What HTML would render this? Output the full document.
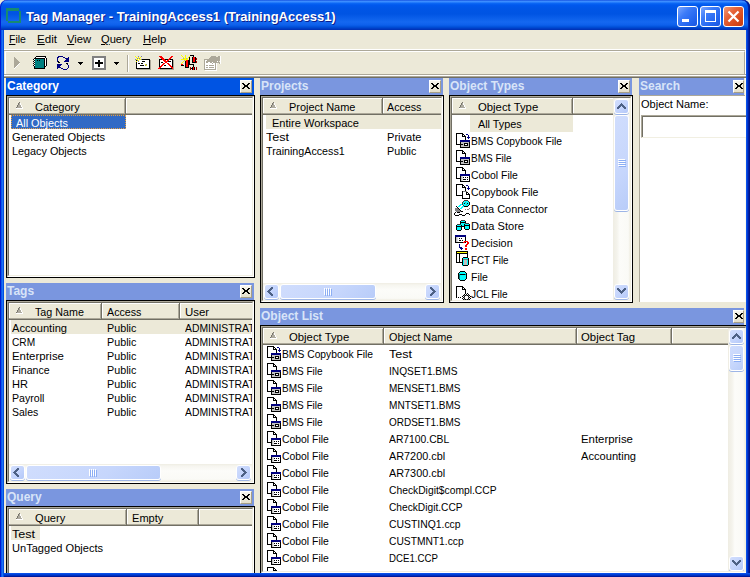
<!DOCTYPE html>
<html><head><meta charset="utf-8"><style>
html,body{margin:0;padding:0;width:750px;height:577px;overflow:hidden;background:#ECE9D8}
body>div,body>svg{position:absolute}
#root{position:absolute;left:0;top:0;width:750px;height:577px;overflow:hidden}
#root div,#root svg{position:absolute}
.t{font-family:'Liberation Sans', sans-serif;font-size:11px;line-height:14px;white-space:nowrap;color:#000}
u{text-decoration:underline}
</style></head><body><svg width="0" height="0" style="position:absolute"><defs><symbol id="i0" viewBox="0 0 18 17"><rect x="3" y="1" width="7" height="1" fill="#000"/><rect x="3" y="2" width="1" height="1" fill="#000"/><rect x="4" y="2" width="5" height="1" fill="#fff"/><rect x="9" y="2" width="2" height="1" fill="#000"/><rect x="13" y="2" width="2" height="1" fill="#000080"/><rect x="3" y="3" width="1" height="1" fill="#000"/><rect x="4" y="3" width="5" height="1" fill="#fff"/><rect x="9" y="3" width="1" height="1" fill="#000"/><rect x="10" y="3" width="1" height="1" fill="#fff"/><rect x="11" y="3" width="1" height="1" fill="#000"/><rect x="15" y="3" width="1" height="1" fill="#000080"/><rect x="3" y="4" width="1" height="1" fill="#000"/><rect x="4" y="4" width="5" height="1" fill="#fff"/><rect x="9" y="4" width="4" height="1" fill="#000"/><rect x="15" y="4" width="1" height="1" fill="#000080"/><rect x="3" y="5" width="1" height="1" fill="#000"/><rect x="4" y="5" width="8" height="1" fill="#fff"/><rect x="12" y="5" width="1" height="1" fill="#000"/><rect x="14" y="5" width="3" height="1" fill="#000080"/><rect x="3" y="6" width="1" height="1" fill="#000"/><rect x="4" y="6" width="8" height="1" fill="#fff"/><rect x="12" y="6" width="1" height="1" fill="#000"/><rect x="15" y="6" width="1" height="1" fill="#000080"/><rect x="3" y="7" width="1" height="1" fill="#000"/><rect x="4" y="7" width="8" height="1" fill="#fff"/><rect x="12" y="7" width="1" height="1" fill="#000"/><rect x="3" y="8" width="1" height="1" fill="#000"/><rect x="4" y="8" width="3" height="1" fill="#fff"/><rect x="7" y="8" width="10" height="1" fill="#000080"/><rect x="3" y="9" width="1" height="1" fill="#000"/><rect x="4" y="9" width="3" height="1" fill="#fff"/><rect x="7" y="9" width="10" height="1" fill="#000080"/><rect x="3" y="10" width="1" height="1" fill="#000"/><rect x="4" y="10" width="3" height="1" fill="#fff"/><rect x="7" y="10" width="1" height="1" fill="#000"/><rect x="8" y="10" width="8" height="1" fill="#C0C0C0"/><rect x="16" y="10" width="1" height="1" fill="#000"/><rect x="3" y="11" width="1" height="1" fill="#000"/><rect x="4" y="11" width="3" height="1" fill="#fff"/><rect x="7" y="11" width="1" height="1" fill="#000"/><rect x="8" y="11" width="3" height="1" fill="#C0C0C0"/><rect x="11" y="11" width="4" height="1" fill="#000"/><rect x="15" y="11" width="1" height="1" fill="#C0C0C0"/><rect x="16" y="11" width="1" height="1" fill="#000"/><rect x="3" y="12" width="7" height="1" fill="#000"/><rect x="10" y="12" width="1" height="1" fill="#C0C0C0"/><rect x="11" y="12" width="1" height="1" fill="#000"/><rect x="12" y="12" width="2" height="1" fill="#fff"/><rect x="14" y="12" width="1" height="1" fill="#000"/><rect x="15" y="12" width="1" height="1" fill="#C0C0C0"/><rect x="16" y="12" width="1" height="1" fill="#000"/><rect x="7" y="13" width="1" height="1" fill="#000"/><rect x="8" y="13" width="3" height="1" fill="#C0C0C0"/><rect x="11" y="13" width="4" height="1" fill="#000"/><rect x="15" y="13" width="1" height="1" fill="#C0C0C0"/><rect x="16" y="13" width="1" height="1" fill="#000"/><rect x="7" y="14" width="1" height="1" fill="#000"/><rect x="8" y="14" width="8" height="1" fill="#C0C0C0"/><rect x="16" y="14" width="1" height="1" fill="#000"/><rect x="7" y="15" width="10" height="1" fill="#000"/></symbol><symbol id="i1" viewBox="0 0 18 17"><rect x="3" y="1" width="7" height="1" fill="#000"/><rect x="3" y="2" width="1" height="1" fill="#000"/><rect x="4" y="2" width="5" height="1" fill="#fff"/><rect x="9" y="2" width="2" height="1" fill="#000"/><rect x="3" y="3" width="1" height="1" fill="#000"/><rect x="4" y="3" width="5" height="1" fill="#fff"/><rect x="9" y="3" width="1" height="1" fill="#000"/><rect x="10" y="3" width="1" height="1" fill="#fff"/><rect x="11" y="3" width="1" height="1" fill="#000"/><rect x="3" y="4" width="1" height="1" fill="#000"/><rect x="4" y="4" width="5" height="1" fill="#fff"/><rect x="9" y="4" width="4" height="1" fill="#000"/><rect x="3" y="5" width="1" height="1" fill="#000"/><rect x="4" y="5" width="8" height="1" fill="#fff"/><rect x="12" y="5" width="1" height="1" fill="#000"/><rect x="3" y="6" width="1" height="1" fill="#000"/><rect x="4" y="6" width="8" height="1" fill="#fff"/><rect x="12" y="6" width="1" height="1" fill="#000"/><rect x="3" y="7" width="1" height="1" fill="#000"/><rect x="4" y="7" width="8" height="1" fill="#fff"/><rect x="12" y="7" width="1" height="1" fill="#000"/><rect x="3" y="8" width="1" height="1" fill="#000"/><rect x="4" y="8" width="3" height="1" fill="#fff"/><rect x="7" y="8" width="10" height="1" fill="#000080"/><rect x="3" y="9" width="1" height="1" fill="#000"/><rect x="4" y="9" width="3" height="1" fill="#fff"/><rect x="7" y="9" width="10" height="1" fill="#000080"/><rect x="3" y="10" width="1" height="1" fill="#000"/><rect x="4" y="10" width="3" height="1" fill="#fff"/><rect x="7" y="10" width="1" height="1" fill="#000"/><rect x="8" y="10" width="8" height="1" fill="#C0C0C0"/><rect x="16" y="10" width="1" height="1" fill="#000"/><rect x="3" y="11" width="1" height="1" fill="#000"/><rect x="4" y="11" width="3" height="1" fill="#fff"/><rect x="7" y="11" width="1" height="1" fill="#000"/><rect x="8" y="11" width="3" height="1" fill="#C0C0C0"/><rect x="11" y="11" width="4" height="1" fill="#000"/><rect x="15" y="11" width="1" height="1" fill="#C0C0C0"/><rect x="16" y="11" width="1" height="1" fill="#000"/><rect x="3" y="12" width="7" height="1" fill="#000"/><rect x="10" y="12" width="1" height="1" fill="#C0C0C0"/><rect x="11" y="12" width="1" height="1" fill="#000"/><rect x="12" y="12" width="2" height="1" fill="#fff"/><rect x="14" y="12" width="1" height="1" fill="#000"/><rect x="15" y="12" width="1" height="1" fill="#C0C0C0"/><rect x="16" y="12" width="1" height="1" fill="#000"/><rect x="7" y="13" width="1" height="1" fill="#000"/><rect x="8" y="13" width="3" height="1" fill="#C0C0C0"/><rect x="11" y="13" width="4" height="1" fill="#000"/><rect x="15" y="13" width="1" height="1" fill="#C0C0C0"/><rect x="16" y="13" width="1" height="1" fill="#000"/><rect x="7" y="14" width="1" height="1" fill="#000"/><rect x="8" y="14" width="8" height="1" fill="#C0C0C0"/><rect x="16" y="14" width="1" height="1" fill="#000"/><rect x="7" y="15" width="10" height="1" fill="#000"/></symbol><symbol id="i2" viewBox="0 0 18 17"><rect x="3" y="1" width="7" height="1" fill="#000"/><rect x="3" y="2" width="1" height="1" fill="#000"/><rect x="4" y="2" width="5" height="1" fill="#fff"/><rect x="9" y="2" width="2" height="1" fill="#000"/><rect x="3" y="3" width="1" height="1" fill="#000"/><rect x="4" y="3" width="5" height="1" fill="#fff"/><rect x="9" y="3" width="1" height="1" fill="#000"/><rect x="10" y="3" width="1" height="1" fill="#fff"/><rect x="11" y="3" width="1" height="1" fill="#000"/><rect x="3" y="4" width="1" height="1" fill="#000"/><rect x="4" y="4" width="5" height="1" fill="#fff"/><rect x="9" y="4" width="4" height="1" fill="#000"/><rect x="3" y="5" width="1" height="1" fill="#000"/><rect x="4" y="5" width="8" height="1" fill="#fff"/><rect x="12" y="5" width="1" height="1" fill="#000"/><rect x="3" y="6" width="1" height="1" fill="#000"/><rect x="4" y="6" width="8" height="1" fill="#fff"/><rect x="12" y="6" width="1" height="1" fill="#000"/><rect x="3" y="7" width="1" height="1" fill="#000"/><rect x="4" y="7" width="8" height="1" fill="#fff"/><rect x="12" y="7" width="1" height="1" fill="#000"/><rect x="3" y="8" width="1" height="1" fill="#000"/><rect x="4" y="8" width="3" height="1" fill="#fff"/><rect x="7" y="8" width="10" height="1" fill="#000080"/><rect x="3" y="9" width="1" height="1" fill="#000"/><rect x="4" y="9" width="3" height="1" fill="#fff"/><rect x="7" y="9" width="10" height="1" fill="#000080"/><rect x="3" y="10" width="1" height="1" fill="#000"/><rect x="4" y="10" width="3" height="1" fill="#fff"/><rect x="7" y="10" width="1" height="1" fill="#000"/><rect x="8" y="10" width="1" height="1" fill="#C0C0C0"/><rect x="9" y="10" width="1" height="1" fill="#E0E0E0"/><rect x="10" y="10" width="6" height="1" fill="#fff"/><rect x="16" y="10" width="1" height="1" fill="#000"/><rect x="3" y="11" width="1" height="1" fill="#000"/><rect x="4" y="11" width="3" height="1" fill="#fff"/><rect x="7" y="11" width="1" height="1" fill="#000"/><rect x="8" y="11" width="1" height="1" fill="#C0C0C0"/><rect x="9" y="11" width="1" height="1" fill="#E0E0E0"/><rect x="10" y="11" width="1" height="1" fill="#000"/><rect x="11" y="11" width="1" height="1" fill="#fff"/><rect x="12" y="11" width="1" height="1" fill="#000"/><rect x="13" y="11" width="1" height="1" fill="#fff"/><rect x="14" y="11" width="1" height="1" fill="#000"/><rect x="15" y="11" width="1" height="1" fill="#fff"/><rect x="16" y="11" width="1" height="1" fill="#000"/><rect x="3" y="12" width="5" height="1" fill="#000"/><rect x="8" y="12" width="1" height="1" fill="#C0C0C0"/><rect x="9" y="12" width="1" height="1" fill="#E0E0E0"/><rect x="10" y="12" width="6" height="1" fill="#fff"/><rect x="16" y="12" width="1" height="1" fill="#000"/><rect x="7" y="13" width="1" height="1" fill="#000"/><rect x="8" y="13" width="1" height="1" fill="#C0C0C0"/><rect x="9" y="13" width="1" height="1" fill="#E0E0E0"/><rect x="10" y="13" width="3" height="1" fill="#000"/><rect x="13" y="13" width="1" height="1" fill="#fff"/><rect x="14" y="13" width="1" height="1" fill="#000"/><rect x="15" y="13" width="1" height="1" fill="#fff"/><rect x="16" y="13" width="1" height="1" fill="#000"/><rect x="7" y="14" width="1" height="1" fill="#000"/><rect x="8" y="14" width="1" height="1" fill="#C0C0C0"/><rect x="9" y="14" width="1" height="1" fill="#E0E0E0"/><rect x="10" y="14" width="6" height="1" fill="#fff"/><rect x="16" y="14" width="1" height="1" fill="#000"/><rect x="7" y="15" width="10" height="1" fill="#000"/></symbol><symbol id="i3" viewBox="0 0 18 17"><rect x="3" y="1" width="7" height="1" fill="#000"/><rect x="3" y="2" width="1" height="1" fill="#000"/><rect x="4" y="2" width="5" height="1" fill="#fff"/><rect x="9" y="2" width="2" height="1" fill="#000"/><rect x="13" y="2" width="2" height="1" fill="#000080"/><rect x="3" y="3" width="1" height="1" fill="#000"/><rect x="4" y="3" width="5" height="1" fill="#fff"/><rect x="9" y="3" width="1" height="1" fill="#000"/><rect x="10" y="3" width="1" height="1" fill="#fff"/><rect x="11" y="3" width="1" height="1" fill="#000"/><rect x="15" y="3" width="1" height="1" fill="#000080"/><rect x="3" y="4" width="1" height="1" fill="#000"/><rect x="4" y="4" width="5" height="1" fill="#fff"/><rect x="9" y="4" width="4" height="1" fill="#000"/><rect x="15" y="4" width="1" height="1" fill="#000080"/><rect x="3" y="5" width="1" height="1" fill="#000"/><rect x="4" y="5" width="8" height="1" fill="#fff"/><rect x="12" y="5" width="1" height="1" fill="#000"/><rect x="14" y="5" width="3" height="1" fill="#000080"/><rect x="3" y="6" width="1" height="1" fill="#000"/><rect x="4" y="6" width="8" height="1" fill="#fff"/><rect x="12" y="6" width="1" height="1" fill="#000"/><rect x="15" y="6" width="1" height="1" fill="#000080"/><rect x="3" y="7" width="1" height="1" fill="#000"/><rect x="4" y="7" width="8" height="1" fill="#fff"/><rect x="12" y="7" width="1" height="1" fill="#000"/><rect x="3" y="8" width="1" height="1" fill="#000"/><rect x="4" y="8" width="5" height="1" fill="#fff"/><rect x="9" y="8" width="1" height="1" fill="#000"/><rect x="10" y="8" width="4" height="1" fill="#808080"/><rect x="14" y="8" width="3" height="1" fill="#fff"/><rect x="3" y="9" width="1" height="1" fill="#000"/><rect x="4" y="9" width="5" height="1" fill="#fff"/><rect x="9" y="9" width="1" height="1" fill="#000"/><rect x="10" y="9" width="3" height="1" fill="#fff"/><rect x="13" y="9" width="2" height="1" fill="#000"/><rect x="3" y="10" width="1" height="1" fill="#000"/><rect x="4" y="10" width="5" height="1" fill="#fff"/><rect x="9" y="10" width="1" height="1" fill="#000"/><rect x="10" y="10" width="3" height="1" fill="#fff"/><rect x="13" y="10" width="1" height="1" fill="#000"/><rect x="14" y="10" width="1" height="1" fill="#fff"/><rect x="15" y="10" width="1" height="1" fill="#000"/><rect x="3" y="11" width="1" height="1" fill="#000"/><rect x="4" y="11" width="5" height="1" fill="#fff"/><rect x="9" y="11" width="1" height="1" fill="#000"/><rect x="10" y="11" width="3" height="1" fill="#fff"/><rect x="13" y="11" width="4" height="1" fill="#000"/><rect x="3" y="12" width="7" height="1" fill="#000"/><rect x="10" y="12" width="6" height="1" fill="#fff"/><rect x="16" y="12" width="1" height="1" fill="#000"/><rect x="9" y="13" width="1" height="1" fill="#000"/><rect x="10" y="13" width="6" height="1" fill="#fff"/><rect x="16" y="13" width="1" height="1" fill="#000"/><rect x="9" y="14" width="1" height="1" fill="#000"/><rect x="10" y="14" width="6" height="1" fill="#fff"/><rect x="16" y="14" width="1" height="1" fill="#000"/><rect x="9" y="15" width="8" height="1" fill="#000"/></symbol><symbol id="i4" viewBox="0 0 18 17"><rect x="11" y="0" width="4" height="1" fill="#404040"/><rect x="10" y="1" width="1" height="1" fill="#404040"/><rect x="11" y="1" width="4" height="1" fill="#00FFFF"/><rect x="15" y="1" width="1" height="1" fill="#404040"/><rect x="9" y="2" width="1" height="1" fill="#404040"/><rect x="10" y="2" width="2" height="1" fill="#00FFFF"/><rect x="12" y="2" width="1" height="1" fill="#808080"/><rect x="13" y="2" width="3" height="1" fill="#00FFFF"/><rect x="16" y="2" width="1" height="1" fill="#000"/><rect x="9" y="3" width="1" height="1" fill="#404040"/><rect x="10" y="3" width="1" height="1" fill="#00FFFF"/><rect x="11" y="3" width="1" height="1" fill="#000"/><rect x="12" y="3" width="2" height="1" fill="#00FFFF"/><rect x="14" y="3" width="1" height="1" fill="#000"/><rect x="15" y="3" width="1" height="1" fill="#00FFFF"/><rect x="16" y="3" width="1" height="1" fill="#000"/><rect x="7" y="4" width="2" height="1" fill="#00FFFF"/><rect x="9" y="4" width="1" height="1" fill="#404040"/><rect x="10" y="4" width="3" height="1" fill="#00FFFF"/><rect x="13" y="4" width="1" height="1" fill="#808080"/><rect x="14" y="4" width="2" height="1" fill="#00FFFF"/><rect x="16" y="4" width="1" height="1" fill="#000"/><rect x="6" y="5" width="2" height="1" fill="#00FFFF"/><rect x="10" y="5" width="1" height="1" fill="#404040"/><rect x="11" y="5" width="4" height="1" fill="#00FFFF"/><rect x="15" y="5" width="1" height="1" fill="#000"/><rect x="3" y="6" width="1" height="1" fill="#000"/><rect x="5" y="6" width="2" height="1" fill="#00FFFF"/><rect x="9" y="6" width="2" height="1" fill="#00FFFF"/><rect x="11" y="6" width="4" height="1" fill="#000"/><rect x="4" y="7" width="1" height="1" fill="#000"/><rect x="8" y="7" width="2" height="1" fill="#00FFFF"/><rect x="2" y="8" width="3" height="1" fill="#808080"/><rect x="5" y="8" width="1" height="1" fill="#000"/><rect x="7" y="8" width="2" height="1" fill="#00FFFF"/><rect x="16" y="8" width="1" height="1" fill="#808080"/><rect x="2" y="9" width="4" height="1" fill="#808080"/><rect x="6" y="9" width="1" height="1" fill="#000"/><rect x="12" y="9" width="1" height="1" fill="#808080"/><rect x="14" y="9" width="2" height="1" fill="#808080"/><rect x="2" y="10" width="5" height="1" fill="#808080"/><rect x="7" y="10" width="1" height="1" fill="#000"/><rect x="3" y="11" width="5" height="1" fill="#808080"/><rect x="8" y="11" width="2" height="1" fill="#000"/><rect x="2" y="12" width="1" height="1" fill="#000"/><rect x="4" y="12" width="3" height="1" fill="#000"/><rect x="1" y="13" width="1" height="1" fill="#000"/><rect x="13" y="13" width="3" height="1" fill="#000"/><rect x="1" y="14" width="1" height="1" fill="#000"/><rect x="6" y="14" width="3" height="1" fill="#000"/><rect x="12" y="14" width="1" height="1" fill="#000"/><rect x="16" y="14" width="1" height="1" fill="#000"/><rect x="2" y="15" width="4" height="1" fill="#000"/><rect x="9" y="15" width="3" height="1" fill="#000"/></symbol><symbol id="i5" viewBox="0 0 18 17"><rect x="8" y="3" width="4" height="1" fill="#404040"/><rect x="7" y="4" width="1" height="1" fill="#000"/><rect x="8" y="4" width="4" height="1" fill="#00FFFF"/><rect x="12" y="4" width="1" height="1" fill="#000"/><rect x="7" y="5" width="6" height="1" fill="#000"/><rect x="7" y="6" width="1" height="1" fill="#000"/><rect x="8" y="6" width="4" height="1" fill="#00FFFF"/><rect x="12" y="6" width="4" height="1" fill="#404040"/><rect x="4" y="7" width="4" height="1" fill="#404040"/><rect x="8" y="7" width="3" height="1" fill="#00FFFF"/><rect x="11" y="7" width="1" height="1" fill="#000"/><rect x="12" y="7" width="4" height="1" fill="#00FFFF"/><rect x="16" y="7" width="1" height="1" fill="#000"/><rect x="3" y="8" width="1" height="1" fill="#000"/><rect x="4" y="8" width="4" height="1" fill="#00FFFF"/><rect x="8" y="8" width="1" height="1" fill="#000"/><rect x="9" y="8" width="2" height="1" fill="#00FFFF"/><rect x="11" y="8" width="6" height="1" fill="#000"/><rect x="3" y="9" width="9" height="1" fill="#000"/><rect x="12" y="9" width="4" height="1" fill="#00FFFF"/><rect x="16" y="9" width="1" height="1" fill="#000"/><rect x="3" y="10" width="1" height="1" fill="#000"/><rect x="4" y="10" width="4" height="1" fill="#00FFFF"/><rect x="8" y="10" width="1" height="1" fill="#000"/><rect x="11" y="10" width="1" height="1" fill="#000"/><rect x="12" y="10" width="4" height="1" fill="#00FFFF"/><rect x="16" y="10" width="1" height="1" fill="#000"/><rect x="3" y="11" width="1" height="1" fill="#000"/><rect x="4" y="11" width="4" height="1" fill="#00FFFF"/><rect x="8" y="11" width="1" height="1" fill="#000"/><rect x="11" y="11" width="1" height="1" fill="#000"/><rect x="12" y="11" width="4" height="1" fill="#00FFFF"/><rect x="16" y="11" width="1" height="1" fill="#000"/><rect x="3" y="12" width="1" height="1" fill="#000"/><rect x="4" y="12" width="4" height="1" fill="#00FFFF"/><rect x="8" y="12" width="1" height="1" fill="#000"/><rect x="12" y="12" width="4" height="1" fill="#000"/><rect x="4" y="13" width="4" height="1" fill="#000"/></symbol><symbol id="i6" viewBox="0 0 18 17"><rect x="2" y="1" width="11" height="1" fill="#000080"/><rect x="2" y="2" width="11" height="1" fill="#000080"/><rect x="2" y="3" width="1" height="1" fill="#000"/><rect x="3" y="3" width="1" height="1" fill="#C0C0C0"/><rect x="4" y="3" width="1" height="1" fill="#E0E0E0"/><rect x="5" y="3" width="7" height="1" fill="#fff"/><rect x="12" y="3" width="1" height="1" fill="#000"/><rect x="2" y="4" width="1" height="1" fill="#000"/><rect x="3" y="4" width="1" height="1" fill="#C0C0C0"/><rect x="4" y="4" width="1" height="1" fill="#E0E0E0"/><rect x="5" y="4" width="1" height="1" fill="#fff"/><rect x="6" y="4" width="1" height="1" fill="#000"/><rect x="7" y="4" width="1" height="1" fill="#fff"/><rect x="8" y="4" width="1" height="1" fill="#000"/><rect x="9" y="4" width="3" height="1" fill="#fff"/><rect x="12" y="4" width="1" height="1" fill="#000"/><rect x="2" y="5" width="1" height="1" fill="#000"/><rect x="3" y="5" width="1" height="1" fill="#C0C0C0"/><rect x="4" y="5" width="1" height="1" fill="#E0E0E0"/><rect x="5" y="5" width="7" height="1" fill="#fff"/><rect x="12" y="5" width="1" height="1" fill="#000"/><rect x="2" y="6" width="1" height="1" fill="#000"/><rect x="3" y="6" width="1" height="1" fill="#C0C0C0"/><rect x="4" y="6" width="1" height="1" fill="#E0E0E0"/><rect x="5" y="6" width="1" height="1" fill="#fff"/><rect x="6" y="6" width="2" height="1" fill="#000"/><rect x="8" y="6" width="1" height="1" fill="#fff"/><rect x="9" y="6" width="1" height="1" fill="#000"/><rect x="10" y="6" width="2" height="1" fill="#fff"/><rect x="12" y="6" width="1" height="1" fill="#000"/><rect x="2" y="7" width="1" height="1" fill="#000"/><rect x="3" y="7" width="1" height="1" fill="#C0C0C0"/><rect x="4" y="7" width="1" height="1" fill="#E0E0E0"/><rect x="5" y="7" width="6" height="1" fill="#fff"/><rect x="11" y="7" width="4" height="1" fill="#FF0000"/><rect x="2" y="8" width="8" height="1" fill="#000"/><rect x="10" y="8" width="2" height="1" fill="#FF0000"/><rect x="12" y="8" width="1" height="1" fill="#000"/><rect x="14" y="8" width="2" height="1" fill="#FF0000"/><rect x="14" y="9" width="2" height="1" fill="#FF0000"/><rect x="6" y="10" width="1" height="1" fill="#000080"/><rect x="13" y="10" width="2" height="1" fill="#FF0000"/><rect x="6" y="11" width="1" height="1" fill="#000080"/><rect x="12" y="11" width="2" height="1" fill="#FF0000"/><rect x="6" y="12" width="1" height="1" fill="#000080"/><rect x="12" y="12" width="2" height="1" fill="#FF0000"/><rect x="6" y="13" width="3" height="1" fill="#000080"/><rect x="7" y="14" width="3" height="1" fill="#000080"/><rect x="12" y="14" width="2" height="1" fill="#FF0000"/><rect x="8" y="15" width="1" height="1" fill="#000080"/><rect x="12" y="15" width="2" height="1" fill="#FF0000"/></symbol><symbol id="i7" viewBox="0 0 18 17"><rect x="3" y="0" width="12" height="1" fill="#000"/><rect x="3" y="1" width="1" height="1" fill="#000"/><rect x="4" y="1" width="10" height="1" fill="#FFFF00"/><rect x="14" y="1" width="1" height="1" fill="#000"/><rect x="3" y="2" width="12" height="1" fill="#000"/><rect x="3" y="3" width="1" height="1" fill="#000"/><rect x="4" y="3" width="2" height="1" fill="#fff"/><rect x="6" y="3" width="1" height="1" fill="#000"/><rect x="7" y="3" width="7" height="1" fill="#fff"/><rect x="14" y="3" width="1" height="1" fill="#000"/><rect x="3" y="4" width="1" height="1" fill="#000"/><rect x="4" y="4" width="2" height="1" fill="#fff"/><rect x="6" y="4" width="1" height="1" fill="#000"/><rect x="7" y="4" width="7" height="1" fill="#fff"/><rect x="14" y="4" width="1" height="1" fill="#000"/><rect x="3" y="5" width="1" height="1" fill="#000"/><rect x="4" y="5" width="2" height="1" fill="#fff"/><rect x="6" y="5" width="1" height="1" fill="#000"/><rect x="7" y="5" width="7" height="1" fill="#fff"/><rect x="14" y="5" width="1" height="1" fill="#000"/><rect x="3" y="6" width="1" height="1" fill="#000"/><rect x="4" y="6" width="2" height="1" fill="#fff"/><rect x="6" y="6" width="1" height="1" fill="#000"/><rect x="7" y="6" width="3" height="1" fill="#fff"/><rect x="10" y="6" width="5" height="1" fill="#000"/><rect x="3" y="7" width="1" height="1" fill="#000"/><rect x="4" y="7" width="2" height="1" fill="#fff"/><rect x="6" y="7" width="1" height="1" fill="#000"/><rect x="7" y="7" width="2" height="1" fill="#fff"/><rect x="9" y="7" width="1" height="1" fill="#000"/><rect x="10" y="7" width="5" height="1" fill="#00FFFF"/><rect x="15" y="7" width="1" height="1" fill="#000"/><rect x="3" y="8" width="1" height="1" fill="#000"/><rect x="4" y="8" width="2" height="1" fill="#fff"/><rect x="6" y="8" width="1" height="1" fill="#000"/><rect x="7" y="8" width="2" height="1" fill="#fff"/><rect x="9" y="8" width="1" height="1" fill="#000"/><rect x="10" y="8" width="5" height="1" fill="#808080"/><rect x="15" y="8" width="1" height="1" fill="#000"/><rect x="3" y="9" width="1" height="1" fill="#000"/><rect x="4" y="9" width="2" height="1" fill="#fff"/><rect x="6" y="9" width="1" height="1" fill="#000"/><rect x="7" y="9" width="2" height="1" fill="#fff"/><rect x="9" y="9" width="1" height="1" fill="#000"/><rect x="10" y="9" width="1" height="1" fill="#00FFFF"/><rect x="11" y="9" width="3" height="1" fill="#C0C0C0"/><rect x="14" y="9" width="1" height="1" fill="#00FFFF"/><rect x="15" y="9" width="1" height="1" fill="#000"/><rect x="3" y="10" width="1" height="1" fill="#000"/><rect x="4" y="10" width="2" height="1" fill="#fff"/><rect x="6" y="10" width="1" height="1" fill="#000"/><rect x="7" y="10" width="2" height="1" fill="#fff"/><rect x="9" y="10" width="1" height="1" fill="#000"/><rect x="10" y="10" width="1" height="1" fill="#00FFFF"/><rect x="11" y="10" width="3" height="1" fill="#C0C0C0"/><rect x="14" y="10" width="1" height="1" fill="#00FFFF"/><rect x="15" y="10" width="1" height="1" fill="#000"/><rect x="3" y="11" width="7" height="1" fill="#000"/><rect x="10" y="11" width="1" height="1" fill="#00FFFF"/><rect x="11" y="11" width="3" height="1" fill="#C0C0C0"/><rect x="14" y="11" width="1" height="1" fill="#00FFFF"/><rect x="15" y="11" width="1" height="1" fill="#000"/><rect x="9" y="12" width="1" height="1" fill="#000"/><rect x="10" y="12" width="1" height="1" fill="#00FFFF"/><rect x="11" y="12" width="3" height="1" fill="#C0C0C0"/><rect x="14" y="12" width="1" height="1" fill="#00FFFF"/><rect x="15" y="12" width="1" height="1" fill="#000"/><rect x="9" y="13" width="1" height="1" fill="#000"/><rect x="10" y="13" width="1" height="1" fill="#00FFFF"/><rect x="11" y="13" width="3" height="1" fill="#C0C0C0"/><rect x="14" y="13" width="1" height="1" fill="#00FFFF"/><rect x="15" y="13" width="1" height="1" fill="#000"/><rect x="9" y="14" width="1" height="1" fill="#00FFFF"/><rect x="10" y="14" width="5" height="1" fill="#000"/></symbol><symbol id="i8" viewBox="0 0 18 17"><rect x="7" y="3" width="5" height="1" fill="#000"/><rect x="6" y="4" width="1" height="1" fill="#000"/><rect x="7" y="4" width="5" height="1" fill="#00FFFF"/><rect x="12" y="4" width="1" height="1" fill="#000"/><rect x="5" y="5" width="1" height="1" fill="#000"/><rect x="6" y="5" width="7" height="1" fill="#00FFFF"/><rect x="13" y="5" width="1" height="1" fill="#000"/><rect x="5" y="6" width="1" height="1" fill="#000"/><rect x="6" y="6" width="1" height="1" fill="#008080"/><rect x="7" y="6" width="5" height="1" fill="#000"/><rect x="12" y="6" width="1" height="1" fill="#008080"/><rect x="13" y="6" width="1" height="1" fill="#000"/><rect x="5" y="7" width="1" height="1" fill="#000"/><rect x="6" y="7" width="1" height="1" fill="#008080"/><rect x="7" y="7" width="6" height="1" fill="#00FFFF"/><rect x="13" y="7" width="1" height="1" fill="#000"/><rect x="5" y="8" width="1" height="1" fill="#000"/><rect x="6" y="8" width="1" height="1" fill="#008080"/><rect x="7" y="8" width="6" height="1" fill="#00FFFF"/><rect x="13" y="8" width="1" height="1" fill="#000"/><rect x="5" y="9" width="1" height="1" fill="#000"/><rect x="6" y="9" width="1" height="1" fill="#008080"/><rect x="7" y="9" width="6" height="1" fill="#00FFFF"/><rect x="13" y="9" width="1" height="1" fill="#000"/><rect x="5" y="10" width="1" height="1" fill="#000"/><rect x="6" y="10" width="1" height="1" fill="#008080"/><rect x="7" y="10" width="6" height="1" fill="#00FFFF"/><rect x="13" y="10" width="1" height="1" fill="#000"/><rect x="6" y="11" width="1" height="1" fill="#000"/><rect x="7" y="11" width="5" height="1" fill="#00FFFF"/><rect x="12" y="11" width="1" height="1" fill="#000"/><rect x="7" y="12" width="5" height="1" fill="#000"/></symbol><symbol id="i9" viewBox="0 0 18 17"><rect x="3" y="1" width="7" height="1" fill="#000"/><rect x="3" y="2" width="1" height="1" fill="#000"/><rect x="4" y="2" width="5" height="1" fill="#fff"/><rect x="9" y="2" width="2" height="1" fill="#000"/><rect x="3" y="3" width="1" height="1" fill="#000"/><rect x="4" y="3" width="5" height="1" fill="#fff"/><rect x="9" y="3" width="1" height="1" fill="#000"/><rect x="10" y="3" width="1" height="1" fill="#fff"/><rect x="11" y="3" width="1" height="1" fill="#000"/><rect x="3" y="4" width="1" height="1" fill="#000"/><rect x="4" y="4" width="5" height="1" fill="#fff"/><rect x="9" y="4" width="4" height="1" fill="#000"/><rect x="3" y="5" width="1" height="1" fill="#000"/><rect x="4" y="5" width="8" height="1" fill="#fff"/><rect x="12" y="5" width="1" height="1" fill="#000"/><rect x="3" y="6" width="1" height="1" fill="#000"/><rect x="4" y="6" width="8" height="1" fill="#fff"/><rect x="12" y="6" width="1" height="1" fill="#000"/><rect x="3" y="7" width="1" height="1" fill="#000"/><rect x="4" y="7" width="8" height="1" fill="#fff"/><rect x="12" y="7" width="1" height="1" fill="#000"/><rect x="3" y="8" width="1" height="1" fill="#000"/><rect x="4" y="8" width="8" height="1" fill="#fff"/><rect x="12" y="8" width="1" height="1" fill="#000"/><rect x="13" y="8" width="1" height="1" fill="#fff"/><rect x="14" y="8" width="1" height="1" fill="#000"/><rect x="3" y="9" width="1" height="1" fill="#000"/><rect x="4" y="9" width="7" height="1" fill="#fff"/><rect x="11" y="9" width="1" height="1" fill="#000"/><rect x="12" y="9" width="1" height="1" fill="#fff"/><rect x="13" y="9" width="1" height="1" fill="#000"/><rect x="14" y="9" width="1" height="1" fill="#fff"/><rect x="15" y="9" width="1" height="1" fill="#000"/><rect x="3" y="10" width="1" height="1" fill="#000"/><rect x="4" y="10" width="6" height="1" fill="#fff"/><rect x="10" y="10" width="1" height="1" fill="#000"/><rect x="11" y="10" width="1" height="1" fill="#808080"/><rect x="12" y="10" width="1" height="1" fill="#000"/><rect x="13" y="10" width="1" height="1" fill="#808080"/><rect x="14" y="10" width="1" height="1" fill="#000"/><rect x="15" y="10" width="1" height="1" fill="#808080"/><rect x="16" y="10" width="1" height="1" fill="#000"/><rect x="3" y="11" width="1" height="1" fill="#000"/><rect x="4" y="11" width="5" height="1" fill="#fff"/><rect x="9" y="11" width="1" height="1" fill="#000"/><rect x="10" y="11" width="1" height="1" fill="#fff"/><rect x="11" y="11" width="1" height="1" fill="#000"/><rect x="12" y="11" width="3" height="1" fill="#fff"/><rect x="15" y="11" width="1" height="1" fill="#000"/><rect x="16" y="11" width="1" height="1" fill="#fff"/><rect x="17" y="11" width="1" height="1" fill="#000"/><rect x="3" y="12" width="1" height="1" fill="#000"/><rect x="4" y="12" width="1" height="1" fill="#fff"/><rect x="5" y="12" width="1" height="1" fill="#000"/><rect x="6" y="12" width="1" height="1" fill="#fff"/><rect x="7" y="12" width="1" height="1" fill="#000"/><rect x="8" y="12" width="2" height="1" fill="#fff"/><rect x="10" y="12" width="1" height="1" fill="#000"/><rect x="11" y="12" width="1" height="1" fill="#808080"/><rect x="12" y="12" width="3" height="1" fill="#fff"/><rect x="15" y="12" width="1" height="1" fill="#808080"/><rect x="16" y="12" width="1" height="1" fill="#000"/><rect x="17" y="12" width="1" height="1" fill="#fff"/><rect x="9" y="13" width="1" height="1" fill="#000"/><rect x="10" y="13" width="1" height="1" fill="#fff"/><rect x="11" y="13" width="1" height="1" fill="#000"/><rect x="12" y="13" width="3" height="1" fill="#fff"/><rect x="15" y="13" width="1" height="1" fill="#000"/><rect x="16" y="13" width="1" height="1" fill="#fff"/><rect x="17" y="13" width="1" height="1" fill="#000"/><rect x="10" y="14" width="1" height="1" fill="#000"/><rect x="11" y="14" width="1" height="1" fill="#808080"/><rect x="12" y="14" width="1" height="1" fill="#000"/><rect x="13" y="14" width="1" height="1" fill="#808080"/><rect x="14" y="14" width="1" height="1" fill="#000"/><rect x="15" y="14" width="1" height="1" fill="#808080"/><rect x="16" y="14" width="1" height="1" fill="#000"/><rect x="11" y="15" width="1" height="1" fill="#000"/><rect x="12" y="15" width="1" height="1" fill="#fff"/><rect x="13" y="15" width="1" height="1" fill="#000"/><rect x="14" y="15" width="1" height="1" fill="#fff"/><rect x="15" y="15" width="1" height="1" fill="#000"/><rect x="12" y="16" width="1" height="1" fill="#000"/><rect x="13" y="16" width="1" height="1" fill="#fff"/><rect x="14" y="16" width="1" height="1" fill="#000"/></symbol></defs></svg><div id="root">
<div style="left:0px;top:0px;width:750px;height:30px;border-radius:7px 7px 0 0;box-shadow:inset 1px 0 0 #0019CF,inset -1px 0 0 #001588,inset -2px 0 0 #0020A8;background:linear-gradient(to bottom,#0A3FD8 0px,#3D8FFF 1px,#3A8BFF 2px,#0D6AF6 3px,#0058EE 5px,#0055E5 9px,#0054E3 14px,#0A5EEA 18px,#1568F0 22px,#0D60EC 25px,#0050D8 27px,#0038C0 29px,#002FB0 30px)"></div>
<div style="left:4px;top:30px;width:742px;height:543px;background:#ECE9D8"></div>
<div style="left:6px;top:8px;width:13px;height:3px;background:#178A70"></div>
<div style="left:6px;top:11px;width:2px;height:10px;background:#178A70"></div>
<div style="left:19px;top:11px;width:2px;height:12px;background:#178A70"></div>
<div style="left:8px;top:21px;width:11px;height:2px;background:#178A70"></div>
<div class="t" style="left:26px;top:9px;font-weight:bold;font-size:13px;line-height:16px;color:#fff;text-shadow:1px 1px 0 #0A1E8C">Tag Manager - TrainingAccess1 (TrainingAccess1)</div>
<div style="left:677px;top:6px;width:21px;height:21px;box-sizing:border-box;border:1px solid #fff;border-radius:3px;background:linear-gradient(135deg,#7BA6FF 0%,#3C7BF8 35%,#2466F0 70%,#1A56E0 100%)"></div>
<div style="left:700px;top:6px;width:21px;height:21px;box-sizing:border-box;border:1px solid #fff;border-radius:3px;background:linear-gradient(135deg,#7BA6FF 0%,#3C7BF8 35%,#2466F0 70%,#1A56E0 100%)"></div>
<div style="left:723px;top:6px;width:21px;height:21px;box-sizing:border-box;border:1px solid #fff;border-radius:3px;background:linear-gradient(135deg,#F09A78 0%,#E6643A 35%,#D84A1C 70%,#C63C12 100%)"></div>
<div style="left:682px;top:19px;width:7px;height:3px;background:#fff"></div>
<div style="left:705px;top:10px;width:11px;height:12px;box-sizing:border-box;border:1px solid #fff;border-top-width:3px"></div>
<svg style="left:727px;top:10px" width="13" height="13" viewBox="0 0 13 13"><path d="M1.5 1.5L11.5 11.5M11.5 1.5L1.5 11.5" stroke="#fff" stroke-width="2.2"/></svg>
<div style="left:9px;top:32px;width:1px;height:1px"><div class="t" style="left:0;top:0;font-size:11px;line-height:14px;transform-origin:0 0;transform:scaleX(0.955)"><u>F</u>ile</div></div>
<div style="left:37px;top:32px;width:1px;height:1px"><div class="t" style="left:0;top:0;font-size:11px;line-height:14px;transform-origin:0 0;transform:scaleX(1.056)"><u>E</u>dit</div></div>
<div style="left:67px;top:32px;width:1px;height:1px"><div class="t" style="left:0;top:0;font-size:11px;line-height:14px;transform-origin:0 0;transform:scaleX(1.021)"><u>V</u>iew</div></div>
<div style="left:101px;top:32px;width:1px;height:1px"><div class="t" style="left:0;top:0;font-size:11px;line-height:14px;transform-origin:0 0;transform:scaleX(1.012)"><u>Q</u>uery</div></div>
<div style="left:143px;top:32px;width:1px;height:1px"><div class="t" style="left:0;top:0;font-size:11px;line-height:14px;transform-origin:0 0;transform:scaleX(1.022)"><u>H</u>elp</div></div>
<div style="left:4px;top:49px;width:742px;height:1px;background:#fff"></div>
<div style="left:4px;top:50px;width:742px;height:1px;background:#ACA899"></div>
<div style="left:5px;top:51px;width:740px;height:23px;box-sizing:border-box;border-left:1px solid #fff;border-top:1px solid #fff;border-right:1px solid #ACA899"></div>
<div style="left:745px;top:50px;width:1px;height:26px;background:#fff"></div>
<div style="left:4px;top:74px;width:742px;height:1px;background:#ACA899"></div>
<div style="left:4px;top:75px;width:742px;height:1px;background:#fff"></div>
<div style="left:4px;top:76px;width:742px;height:1px;background:#ACA899"></div>
<div style="left:4px;top:77px;width:742px;height:1px;background:#716F64"></div>
<svg style="left:14px;top:57px" width="7" height="12" viewBox="0 0 7 12" shape-rendering="crispEdges"><rect x="0" y="0" width="1" height="1" fill="#ACA899"/><rect x="0" y="1" width="2" height="1" fill="#ACA899"/><rect x="0" y="2" width="3" height="1" fill="#ACA899"/><rect x="0" y="3" width="4" height="1" fill="#ACA899"/><rect x="0" y="4" width="5" height="1" fill="#ACA899"/><rect x="0" y="5" width="6" height="1" fill="#ACA899"/><rect x="0" y="6" width="5" height="1" fill="#ACA899"/><rect x="5" y="6" width="1" height="1" fill="#fff"/><rect x="0" y="7" width="4" height="1" fill="#ACA899"/><rect x="4" y="7" width="1" height="1" fill="#fff"/><rect x="0" y="8" width="3" height="1" fill="#ACA899"/><rect x="3" y="8" width="1" height="1" fill="#fff"/><rect x="0" y="9" width="2" height="1" fill="#ACA899"/><rect x="2" y="9" width="1" height="1" fill="#fff"/><rect x="0" y="10" width="1" height="1" fill="#ACA899"/><rect x="1" y="10" width="1" height="1" fill="#fff"/><rect x="0" y="11" width="1" height="1" fill="#fff"/></svg>
<svg style="left:33px;top:56px" width="14" height="13" viewBox="0 0 14 13" shape-rendering="crispEdges"><rect x="3" y="0" width="10" height="1" fill="#000"/><rect x="2" y="1" width="1" height="1" fill="#000"/><rect x="3" y="1" width="9" height="1" fill="#fff"/><rect x="12" y="1" width="1" height="1" fill="#000"/><rect x="1" y="2" width="11" height="1" fill="#000"/><rect x="12" y="2" width="1" height="1" fill="#fff"/><rect x="13" y="2" width="1" height="1" fill="#000"/><rect x="0" y="3" width="1" height="1" fill="#000"/><rect x="1" y="3" width="1" height="1" fill="#fff"/><rect x="2" y="3" width="9" height="1" fill="#008080"/><rect x="11" y="3" width="1" height="1" fill="#000"/><rect x="12" y="3" width="1" height="1" fill="#fff"/><rect x="13" y="3" width="1" height="1" fill="#000"/><rect x="1" y="4" width="1" height="1" fill="#000"/><rect x="2" y="4" width="2" height="1" fill="#008080"/><rect x="4" y="4" width="1" height="1" fill="#000"/><rect x="5" y="4" width="1" height="1" fill="#008080"/><rect x="6" y="4" width="1" height="1" fill="#000"/><rect x="7" y="4" width="4" height="1" fill="#008080"/><rect x="11" y="4" width="1" height="1" fill="#000"/><rect x="12" y="4" width="1" height="1" fill="#fff"/><rect x="13" y="4" width="1" height="1" fill="#000"/><rect x="0" y="5" width="1" height="1" fill="#000"/><rect x="1" y="5" width="1" height="1" fill="#fff"/><rect x="2" y="5" width="9" height="1" fill="#008080"/><rect x="11" y="5" width="1" height="1" fill="#000"/><rect x="12" y="5" width="1" height="1" fill="#fff"/><rect x="13" y="5" width="1" height="1" fill="#000"/><rect x="1" y="6" width="1" height="1" fill="#000"/><rect x="2" y="6" width="9" height="1" fill="#008080"/><rect x="11" y="6" width="1" height="1" fill="#000"/><rect x="12" y="6" width="1" height="1" fill="#fff"/><rect x="13" y="6" width="1" height="1" fill="#000"/><rect x="0" y="7" width="1" height="1" fill="#000"/><rect x="1" y="7" width="1" height="1" fill="#fff"/><rect x="2" y="7" width="9" height="1" fill="#008080"/><rect x="11" y="7" width="1" height="1" fill="#000"/><rect x="12" y="7" width="1" height="1" fill="#fff"/><rect x="13" y="7" width="1" height="1" fill="#000"/><rect x="1" y="8" width="1" height="1" fill="#000"/><rect x="2" y="8" width="9" height="1" fill="#008080"/><rect x="11" y="8" width="1" height="1" fill="#000"/><rect x="12" y="8" width="1" height="1" fill="#fff"/><rect x="13" y="8" width="1" height="1" fill="#000"/><rect x="0" y="9" width="1" height="1" fill="#000"/><rect x="1" y="9" width="1" height="1" fill="#fff"/><rect x="2" y="9" width="9" height="1" fill="#008080"/><rect x="11" y="9" width="1" height="1" fill="#000"/><rect x="12" y="9" width="1" height="1" fill="#fff"/><rect x="13" y="9" width="1" height="1" fill="#000"/><rect x="1" y="10" width="1" height="1" fill="#000"/><rect x="2" y="10" width="9" height="1" fill="#008080"/><rect x="11" y="10" width="2" height="1" fill="#000"/><rect x="1" y="11" width="1" height="1" fill="#000"/><rect x="2" y="11" width="9" height="1" fill="#008080"/><rect x="11" y="11" width="1" height="1" fill="#000"/><rect x="1" y="12" width="11" height="1" fill="#000"/></svg>
<svg style="left:54px;top:52px" width="17" height="19" viewBox="0 0 17 19" shape-rendering="crispEdges"><rect x="4" y="4" width="5" height="1" fill="#000080"/><rect x="3" y="5" width="2" height="1" fill="#000080"/><rect x="9" y="5" width="2" height="1" fill="#000080"/><rect x="14" y="5" width="1" height="1" fill="#000080"/><rect x="3" y="6" width="1" height="1" fill="#000080"/><rect x="11" y="6" width="4" height="1" fill="#000080"/><rect x="3" y="7" width="1" height="1" fill="#000080"/><rect x="12" y="7" width="3" height="1" fill="#000080"/><rect x="3" y="8" width="1" height="1" fill="#000080"/><rect x="11" y="8" width="4" height="1" fill="#000080"/><rect x="3" y="9" width="1" height="1" fill="#000080"/><rect x="4" y="9" width="1" height="1" fill="#000"/><rect x="10" y="9" width="5" height="1" fill="#000080"/><rect x="4" y="10" width="2" height="1" fill="#000"/><rect x="12" y="11" width="2" height="1" fill="#000"/><rect x="3" y="12" width="5" height="1" fill="#000080"/><rect x="13" y="12" width="1" height="1" fill="#000080"/><rect x="3" y="13" width="4" height="1" fill="#000080"/><rect x="14" y="13" width="1" height="1" fill="#000080"/><rect x="3" y="14" width="3" height="1" fill="#000080"/><rect x="14" y="14" width="1" height="1" fill="#000080"/><rect x="3" y="15" width="4" height="1" fill="#000080"/><rect x="14" y="15" width="1" height="1" fill="#000080"/><rect x="3" y="16" width="1" height="1" fill="#000080"/><rect x="7" y="16" width="2" height="1" fill="#000080"/><rect x="13" y="16" width="1" height="1" fill="#000080"/><rect x="9" y="17" width="4" height="1" fill="#000080"/></svg>
<svg style="left:78px;top:62px" width="5" height="3" viewBox="0 0 5 3" shape-rendering="crispEdges"><rect x="0" y="0" width="5" height="1" fill="#000"/><rect x="1" y="1" width="3" height="1" fill="#000"/><rect x="2" y="2" width="1" height="1" fill="#000"/></svg>
<svg style="left:114px;top:62px" width="5" height="3" viewBox="0 0 5 3" shape-rendering="crispEdges"><rect x="0" y="0" width="5" height="1" fill="#000"/><rect x="1" y="1" width="3" height="1" fill="#000"/><rect x="2" y="2" width="1" height="1" fill="#000"/></svg>
<svg style="left:92px;top:56px" width="14" height="14" viewBox="0 0 14 14" shape-rendering="crispEdges"><rect x="0" y="0" width="14" height="1" fill="#808080"/><rect x="0" y="1" width="14" height="1" fill="#808080"/><rect x="0" y="2" width="2" height="1" fill="#808080"/><rect x="2" y="2" width="10" height="1" fill="#fff"/><rect x="12" y="2" width="2" height="1" fill="#808080"/><rect x="0" y="3" width="2" height="1" fill="#808080"/><rect x="2" y="3" width="10" height="1" fill="#fff"/><rect x="12" y="3" width="2" height="1" fill="#808080"/><rect x="0" y="4" width="2" height="1" fill="#808080"/><rect x="2" y="4" width="4" height="1" fill="#fff"/><rect x="6" y="4" width="2" height="1" fill="#000"/><rect x="8" y="4" width="4" height="1" fill="#fff"/><rect x="12" y="4" width="2" height="1" fill="#808080"/><rect x="0" y="5" width="2" height="1" fill="#808080"/><rect x="2" y="5" width="4" height="1" fill="#fff"/><rect x="6" y="5" width="2" height="1" fill="#000"/><rect x="8" y="5" width="4" height="1" fill="#fff"/><rect x="12" y="5" width="2" height="1" fill="#808080"/><rect x="0" y="6" width="2" height="1" fill="#808080"/><rect x="2" y="6" width="1" height="1" fill="#fff"/><rect x="3" y="6" width="8" height="1" fill="#000"/><rect x="11" y="6" width="1" height="1" fill="#fff"/><rect x="12" y="6" width="2" height="1" fill="#808080"/><rect x="0" y="7" width="2" height="1" fill="#808080"/><rect x="2" y="7" width="1" height="1" fill="#fff"/><rect x="3" y="7" width="8" height="1" fill="#000"/><rect x="11" y="7" width="1" height="1" fill="#fff"/><rect x="12" y="7" width="2" height="1" fill="#808080"/><rect x="0" y="8" width="2" height="1" fill="#808080"/><rect x="2" y="8" width="4" height="1" fill="#fff"/><rect x="6" y="8" width="2" height="1" fill="#000"/><rect x="8" y="8" width="4" height="1" fill="#fff"/><rect x="12" y="8" width="2" height="1" fill="#808080"/><rect x="0" y="9" width="2" height="1" fill="#808080"/><rect x="2" y="9" width="4" height="1" fill="#fff"/><rect x="6" y="9" width="2" height="1" fill="#000"/><rect x="8" y="9" width="4" height="1" fill="#fff"/><rect x="12" y="9" width="2" height="1" fill="#808080"/><rect x="0" y="10" width="2" height="1" fill="#808080"/><rect x="2" y="10" width="4" height="1" fill="#fff"/><rect x="6" y="10" width="2" height="1" fill="#000"/><rect x="8" y="10" width="4" height="1" fill="#fff"/><rect x="12" y="10" width="2" height="1" fill="#808080"/><rect x="0" y="11" width="2" height="1" fill="#808080"/><rect x="2" y="11" width="10" height="1" fill="#fff"/><rect x="12" y="11" width="2" height="1" fill="#808080"/><rect x="0" y="12" width="14" height="1" fill="#808080"/><rect x="0" y="13" width="14" height="1" fill="#808080"/></svg>
<svg style="left:127px;top:55px" width="1" height="17" viewBox="0 0 1 17" shape-rendering="crispEdges"><rect x="0" y="0" width="1" height="1" fill="#ACA899"/><rect x="0" y="1" width="1" height="1" fill="#ACA899"/><rect x="0" y="2" width="1" height="1" fill="#ACA899"/><rect x="0" y="3" width="1" height="1" fill="#ACA899"/><rect x="0" y="4" width="1" height="1" fill="#ACA899"/><rect x="0" y="5" width="1" height="1" fill="#ACA899"/><rect x="0" y="6" width="1" height="1" fill="#ACA899"/><rect x="0" y="7" width="1" height="1" fill="#ACA899"/><rect x="0" y="8" width="1" height="1" fill="#ACA899"/><rect x="0" y="9" width="1" height="1" fill="#ACA899"/><rect x="0" y="10" width="1" height="1" fill="#ACA899"/><rect x="0" y="11" width="1" height="1" fill="#ACA899"/><rect x="0" y="12" width="1" height="1" fill="#ACA899"/><rect x="0" y="13" width="1" height="1" fill="#ACA899"/><rect x="0" y="14" width="1" height="1" fill="#ACA899"/><rect x="0" y="15" width="1" height="1" fill="#ACA899"/><rect x="0" y="16" width="1" height="1" fill="#ACA899"/></svg>
<svg style="left:128px;top:55px" width="1" height="17" viewBox="0 0 1 17" shape-rendering="crispEdges"><rect x="0" y="0" width="1" height="1" fill="#fff"/><rect x="0" y="1" width="1" height="1" fill="#fff"/><rect x="0" y="2" width="1" height="1" fill="#fff"/><rect x="0" y="3" width="1" height="1" fill="#fff"/><rect x="0" y="4" width="1" height="1" fill="#fff"/><rect x="0" y="5" width="1" height="1" fill="#fff"/><rect x="0" y="6" width="1" height="1" fill="#fff"/><rect x="0" y="7" width="1" height="1" fill="#fff"/><rect x="0" y="8" width="1" height="1" fill="#fff"/><rect x="0" y="9" width="1" height="1" fill="#fff"/><rect x="0" y="10" width="1" height="1" fill="#fff"/><rect x="0" y="11" width="1" height="1" fill="#fff"/><rect x="0" y="12" width="1" height="1" fill="#fff"/><rect x="0" y="13" width="1" height="1" fill="#fff"/><rect x="0" y="14" width="1" height="1" fill="#fff"/><rect x="0" y="15" width="1" height="1" fill="#fff"/><rect x="0" y="16" width="1" height="1" fill="#fff"/></svg>
<svg style="left:134px;top:55px" width="17" height="16" viewBox="0 0 17 16" shape-rendering="crispEdges"><rect x="1" y="1" width="1" height="1" fill="#FFFF00"/><rect x="4" y="1" width="1" height="1" fill="#8080A0"/><rect x="7" y="1" width="1" height="1" fill="#8080A0"/><rect x="2" y="2" width="1" height="1" fill="#FFFF00"/><rect x="4" y="2" width="1" height="1" fill="#FFFF00"/><rect x="6" y="2" width="1" height="1" fill="#FFFF00"/><rect x="3" y="3" width="1" height="1" fill="#8080A0"/><rect x="4" y="3" width="1" height="1" fill="#FFFF00"/><rect x="5" y="3" width="1" height="1" fill="#8080A0"/><rect x="1" y="4" width="1" height="1" fill="#8080A0"/><rect x="2" y="4" width="2" height="1" fill="#FFFF00"/><rect x="4" y="4" width="1" height="1" fill="#fff"/><rect x="5" y="4" width="2" height="1" fill="#FFFF00"/><rect x="7" y="4" width="1" height="1" fill="#8080A0"/><rect x="8" y="4" width="8" height="1" fill="#000"/><rect x="2" y="5" width="1" height="1" fill="#000"/><rect x="3" y="5" width="1" height="1" fill="#8080A0"/><rect x="4" y="5" width="1" height="1" fill="#FFFF00"/><rect x="5" y="5" width="10" height="1" fill="#fff"/><rect x="15" y="5" width="1" height="1" fill="#000"/><rect x="16" y="5" width="1" height="1" fill="#ACA899"/><rect x="2" y="6" width="1" height="1" fill="#FFFF00"/><rect x="3" y="6" width="1" height="1" fill="#fff"/><rect x="4" y="6" width="1" height="1" fill="#8080A0"/><rect x="5" y="6" width="3" height="1" fill="#fff"/><rect x="8" y="6" width="3" height="1" fill="#000"/><rect x="11" y="6" width="4" height="1" fill="#fff"/><rect x="15" y="6" width="1" height="1" fill="#000"/><rect x="16" y="6" width="1" height="1" fill="#ACA899"/><rect x="2" y="7" width="1" height="1" fill="#000"/><rect x="3" y="7" width="12" height="1" fill="#fff"/><rect x="15" y="7" width="1" height="1" fill="#000"/><rect x="16" y="7" width="1" height="1" fill="#ACA899"/><rect x="2" y="8" width="1" height="1" fill="#000"/><rect x="3" y="8" width="1" height="1" fill="#fff"/><rect x="4" y="8" width="2" height="1" fill="#000"/><rect x="6" y="8" width="1" height="1" fill="#fff"/><rect x="7" y="8" width="2" height="1" fill="#000"/><rect x="9" y="8" width="6" height="1" fill="#fff"/><rect x="15" y="8" width="1" height="1" fill="#000"/><rect x="16" y="8" width="1" height="1" fill="#ACA899"/><rect x="2" y="9" width="1" height="1" fill="#000"/><rect x="3" y="9" width="8" height="1" fill="#fff"/><rect x="11" y="9" width="1" height="1" fill="#FFFF00"/><rect x="12" y="9" width="1" height="1" fill="#8080A0"/><rect x="13" y="9" width="2" height="1" fill="#fff"/><rect x="15" y="9" width="1" height="1" fill="#000"/><rect x="16" y="9" width="1" height="1" fill="#ACA899"/><rect x="2" y="10" width="1" height="1" fill="#000"/><rect x="3" y="10" width="3" height="1" fill="#fff"/><rect x="6" y="10" width="4" height="1" fill="#000"/><rect x="10" y="10" width="1" height="1" fill="#fff"/><rect x="11" y="10" width="1" height="1" fill="#8080A0"/><rect x="12" y="10" width="1" height="1" fill="#FFFF00"/><rect x="13" y="10" width="2" height="1" fill="#fff"/><rect x="15" y="10" width="1" height="1" fill="#000"/><rect x="16" y="10" width="1" height="1" fill="#ACA899"/><rect x="2" y="11" width="1" height="1" fill="#000"/><rect x="3" y="11" width="12" height="1" fill="#fff"/><rect x="15" y="11" width="1" height="1" fill="#000"/><rect x="16" y="11" width="1" height="1" fill="#ACA899"/><rect x="2" y="12" width="1" height="1" fill="#000"/><rect x="3" y="12" width="12" height="1" fill="#fff"/><rect x="15" y="12" width="1" height="1" fill="#000"/><rect x="16" y="12" width="1" height="1" fill="#ACA899"/><rect x="2" y="13" width="14" height="1" fill="#000"/><rect x="16" y="13" width="1" height="1" fill="#ACA899"/><rect x="3" y="14" width="14" height="1" fill="#ACA899"/></svg>
<svg style="left:158px;top:56px" width="16" height="14" viewBox="0 0 16 14" shape-rendering="crispEdges"><rect x="1" y="0" width="3" height="1" fill="#FF0000"/><rect x="13" y="0" width="2" height="1" fill="#FF0000"/><rect x="2" y="1" width="3" height="1" fill="#FF0000"/><rect x="12" y="1" width="2" height="1" fill="#FF0000"/><rect x="3" y="2" width="3" height="1" fill="#FF0000"/><rect x="11" y="2" width="2" height="1" fill="#FF0000"/><rect x="1" y="3" width="3" height="1" fill="#000"/><rect x="4" y="3" width="3" height="1" fill="#FF0000"/><rect x="7" y="3" width="3" height="1" fill="#000"/><rect x="10" y="3" width="2" height="1" fill="#FF0000"/><rect x="12" y="3" width="3" height="1" fill="#000"/><rect x="1" y="4" width="1" height="1" fill="#000"/><rect x="2" y="4" width="3" height="1" fill="#fff"/><rect x="5" y="4" width="3" height="1" fill="#FF0000"/><rect x="8" y="4" width="1" height="1" fill="#fff"/><rect x="9" y="4" width="2" height="1" fill="#FF0000"/><rect x="11" y="4" width="3" height="1" fill="#fff"/><rect x="14" y="4" width="1" height="1" fill="#000"/><rect x="15" y="4" width="1" height="1" fill="#ACA899"/><rect x="1" y="5" width="1" height="1" fill="#000"/><rect x="2" y="5" width="4" height="1" fill="#fff"/><rect x="6" y="5" width="4" height="1" fill="#FF0000"/><rect x="10" y="5" width="3" height="1" fill="#000"/><rect x="13" y="5" width="1" height="1" fill="#fff"/><rect x="14" y="5" width="1" height="1" fill="#000"/><rect x="15" y="5" width="1" height="1" fill="#ACA899"/><rect x="1" y="6" width="1" height="1" fill="#000"/><rect x="2" y="6" width="1" height="1" fill="#fff"/><rect x="3" y="6" width="2" height="1" fill="#000"/><rect x="5" y="6" width="2" height="1" fill="#fff"/><rect x="7" y="6" width="2" height="1" fill="#FF0000"/><rect x="9" y="6" width="5" height="1" fill="#fff"/><rect x="14" y="6" width="1" height="1" fill="#000"/><rect x="15" y="6" width="1" height="1" fill="#ACA899"/><rect x="1" y="7" width="1" height="1" fill="#000"/><rect x="2" y="7" width="3" height="1" fill="#fff"/><rect x="5" y="7" width="2" height="1" fill="#FF0000"/><rect x="7" y="7" width="2" height="1" fill="#fff"/><rect x="9" y="7" width="2" height="1" fill="#FF0000"/><rect x="11" y="7" width="3" height="1" fill="#fff"/><rect x="14" y="7" width="1" height="1" fill="#000"/><rect x="15" y="7" width="1" height="1" fill="#ACA899"/><rect x="1" y="8" width="1" height="1" fill="#000"/><rect x="2" y="8" width="2" height="1" fill="#fff"/><rect x="4" y="8" width="2" height="1" fill="#FF0000"/><rect x="6" y="8" width="4" height="1" fill="#fff"/><rect x="10" y="8" width="2" height="1" fill="#FF0000"/><rect x="12" y="8" width="2" height="1" fill="#fff"/><rect x="14" y="8" width="1" height="1" fill="#000"/><rect x="15" y="8" width="1" height="1" fill="#ACA899"/><rect x="1" y="9" width="1" height="1" fill="#000"/><rect x="2" y="9" width="1" height="1" fill="#fff"/><rect x="3" y="9" width="2" height="1" fill="#FF0000"/><rect x="5" y="9" width="1" height="1" fill="#fff"/><rect x="6" y="9" width="2" height="1" fill="#000"/><rect x="8" y="9" width="3" height="1" fill="#fff"/><rect x="11" y="9" width="2" height="1" fill="#FF0000"/><rect x="13" y="9" width="1" height="1" fill="#fff"/><rect x="14" y="9" width="1" height="1" fill="#000"/><rect x="15" y="9" width="1" height="1" fill="#ACA899"/><rect x="1" y="10" width="1" height="1" fill="#000"/><rect x="2" y="10" width="2" height="1" fill="#FF0000"/><rect x="4" y="10" width="8" height="1" fill="#fff"/><rect x="12" y="10" width="2" height="1" fill="#FF0000"/><rect x="14" y="10" width="1" height="1" fill="#000"/><rect x="15" y="10" width="1" height="1" fill="#ACA899"/><rect x="1" y="11" width="2" height="1" fill="#FF0000"/><rect x="3" y="11" width="10" height="1" fill="#fff"/><rect x="13" y="11" width="2" height="1" fill="#FF0000"/><rect x="15" y="11" width="1" height="1" fill="#ACA899"/><rect x="0" y="12" width="2" height="1" fill="#FF0000"/><rect x="2" y="12" width="12" height="1" fill="#000"/><rect x="14" y="12" width="1" height="1" fill="#FF0000"/><rect x="15" y="12" width="1" height="1" fill="#ACA899"/><rect x="2" y="13" width="14" height="1" fill="#ACA899"/></svg>
<svg style="left:178px;top:52px" width="20" height="19" viewBox="0 0 20 19" shape-rendering="crispEdges"><rect x="3" y="3" width="1" height="1" fill="#FFFF00"/><rect x="7" y="3" width="1" height="1" fill="#FFFF00"/><rect x="12" y="3" width="4" height="1" fill="#000"/><rect x="4" y="4" width="1" height="1" fill="#FFFF00"/><rect x="7" y="4" width="1" height="1" fill="#FFFF00"/><rect x="11" y="4" width="1" height="1" fill="#FFFF00"/><rect x="15" y="4" width="1" height="1" fill="#000"/><rect x="5" y="5" width="1" height="1" fill="#FFFF00"/><rect x="7" y="5" width="1" height="1" fill="#FFFF00"/><rect x="10" y="5" width="1" height="1" fill="#FFFF00"/><rect x="11" y="5" width="1" height="1" fill="#000"/><rect x="14" y="5" width="1" height="1" fill="#000"/><rect x="15" y="5" width="2" height="1" fill="#FF0000"/><rect x="17" y="5" width="1" height="1" fill="#000"/><rect x="5" y="6" width="1" height="1" fill="#A0A0C0"/><rect x="6" y="6" width="2" height="1" fill="#FFFF00"/><rect x="8" y="6" width="1" height="1" fill="#A0A0C0"/><rect x="9" y="6" width="1" height="1" fill="#FFFF00"/><rect x="11" y="6" width="1" height="1" fill="#000"/><rect x="14" y="6" width="1" height="1" fill="#000"/><rect x="15" y="6" width="2" height="1" fill="#FF0000"/><rect x="17" y="6" width="1" height="1" fill="#000"/><rect x="18" y="6" width="1" height="1" fill="#A00000"/><rect x="3" y="7" width="7" height="1" fill="#FFFF00"/><rect x="11" y="7" width="1" height="1" fill="#000"/><rect x="14" y="7" width="1" height="1" fill="#000"/><rect x="15" y="7" width="2" height="1" fill="#FF0000"/><rect x="17" y="7" width="1" height="1" fill="#000"/><rect x="18" y="7" width="1" height="1" fill="#A00000"/><rect x="6" y="8" width="1" height="1" fill="#A0A0C0"/><rect x="7" y="8" width="1" height="1" fill="#FFFF00"/><rect x="8" y="8" width="2" height="1" fill="#FF0000"/><rect x="10" y="8" width="2" height="1" fill="#000"/><rect x="14" y="8" width="1" height="1" fill="#000"/><rect x="15" y="8" width="2" height="1" fill="#FF0000"/><rect x="17" y="8" width="1" height="1" fill="#000"/><rect x="5" y="9" width="1" height="1" fill="#FFFF00"/><rect x="7" y="9" width="1" height="1" fill="#000"/><rect x="8" y="9" width="2" height="1" fill="#FF0000"/><rect x="10" y="9" width="2" height="1" fill="#000"/><rect x="14" y="9" width="1" height="1" fill="#000"/><rect x="15" y="9" width="2" height="1" fill="#FF0000"/><rect x="17" y="9" width="1" height="1" fill="#000"/><rect x="18" y="9" width="1" height="1" fill="#A00000"/><rect x="4" y="10" width="1" height="1" fill="#FFFF00"/><rect x="7" y="10" width="1" height="1" fill="#000"/><rect x="8" y="10" width="2" height="1" fill="#FF0000"/><rect x="10" y="10" width="2" height="1" fill="#000"/><rect x="14" y="10" width="4" height="1" fill="#000"/><rect x="18" y="10" width="1" height="1" fill="#A00000"/><rect x="3" y="11" width="1" height="1" fill="#FFFF00"/><rect x="7" y="11" width="1" height="1" fill="#000"/><rect x="8" y="11" width="2" height="1" fill="#FF0000"/><rect x="10" y="11" width="2" height="1" fill="#000"/><rect x="3" y="12" width="2" height="1" fill="#FF0000"/><rect x="7" y="12" width="1" height="1" fill="#000"/><rect x="8" y="12" width="2" height="1" fill="#FF0000"/><rect x="10" y="12" width="6" height="1" fill="#000"/><rect x="3" y="13" width="3" height="1" fill="#000"/><rect x="7" y="13" width="1" height="1" fill="#000"/><rect x="8" y="13" width="2" height="1" fill="#FF0000"/><rect x="10" y="13" width="1" height="1" fill="#000"/><rect x="15" y="13" width="1" height="1" fill="#000"/><rect x="7" y="14" width="1" height="1" fill="#000"/><rect x="8" y="14" width="2" height="1" fill="#FF0000"/><rect x="10" y="14" width="1" height="1" fill="#000"/><rect x="15" y="14" width="1" height="1" fill="#000"/><rect x="7" y="15" width="4" height="1" fill="#000"/><rect x="12" y="15" width="1" height="1" fill="#A00000"/><rect x="14" y="15" width="1" height="1" fill="#000"/><rect x="15" y="15" width="1" height="1" fill="#FF0000"/><rect x="16" y="15" width="1" height="1" fill="#000"/><rect x="18" y="15" width="1" height="1" fill="#A00000"/><rect x="12" y="16" width="1" height="1" fill="#A00000"/><rect x="13" y="16" width="2" height="1" fill="#000"/><rect x="15" y="16" width="1" height="1" fill="#FF0000"/><rect x="16" y="16" width="1" height="1" fill="#000"/><rect x="18" y="16" width="1" height="1" fill="#A00000"/><rect x="12" y="17" width="1" height="1" fill="#A00000"/><rect x="14" y="17" width="1" height="1" fill="#000"/><rect x="15" y="17" width="1" height="1" fill="#FF0000"/><rect x="16" y="17" width="1" height="1" fill="#000"/><rect x="18" y="17" width="1" height="1" fill="#A00000"/></svg>
<svg style="left:200px;top:52px" width="21" height="19" viewBox="0 0 21 19" shape-rendering="crispEdges"><rect x="11" y="4" width="5" height="1" fill="#ACA899"/><rect x="18" y="4" width="2" height="1" fill="#ACA899"/><rect x="20" y="4" width="1" height="1" fill="#fff"/><rect x="10" y="5" width="10" height="1" fill="#ACA899"/><rect x="20" y="5" width="1" height="1" fill="#fff"/><rect x="9" y="6" width="11" height="1" fill="#ACA899"/><rect x="20" y="6" width="1" height="1" fill="#fff"/><rect x="4" y="7" width="16" height="1" fill="#ACA899"/><rect x="20" y="7" width="1" height="1" fill="#fff"/><rect x="4" y="8" width="1" height="1" fill="#ACA899"/><rect x="5" y="8" width="2" height="1" fill="#fff"/><rect x="7" y="8" width="13" height="1" fill="#ACA899"/><rect x="20" y="8" width="1" height="1" fill="#fff"/><rect x="4" y="9" width="1" height="1" fill="#ACA899"/><rect x="5" y="9" width="1" height="1" fill="#fff"/><rect x="6" y="9" width="11" height="1" fill="#ACA899"/><rect x="17" y="9" width="1" height="1" fill="#fff"/><rect x="18" y="9" width="1" height="1" fill="#ACA899"/><rect x="20" y="9" width="1" height="1" fill="#fff"/><rect x="4" y="10" width="1" height="1" fill="#ACA899"/><rect x="5" y="10" width="1" height="1" fill="#fff"/><rect x="6" y="10" width="2" height="1" fill="#ACA899"/><rect x="8" y="10" width="2" height="1" fill="#fff"/><rect x="10" y="10" width="2" height="1" fill="#ACA899"/><rect x="12" y="10" width="1" height="1" fill="#fff"/><rect x="13" y="10" width="7" height="1" fill="#ACA899"/><rect x="20" y="10" width="1" height="1" fill="#fff"/><rect x="4" y="11" width="1" height="1" fill="#ACA899"/><rect x="5" y="11" width="7" height="1" fill="#fff"/><rect x="12" y="11" width="1" height="1" fill="#ACA899"/><rect x="13" y="11" width="2" height="1" fill="#fff"/><rect x="15" y="11" width="1" height="1" fill="#ACA899"/><rect x="16" y="11" width="1" height="1" fill="#fff"/><rect x="19" y="11" width="1" height="1" fill="#ACA899"/><rect x="20" y="11" width="1" height="1" fill="#fff"/><rect x="4" y="12" width="1" height="1" fill="#ACA899"/><rect x="5" y="12" width="10" height="1" fill="#fff"/><rect x="15" y="12" width="1" height="1" fill="#ACA899"/><rect x="16" y="12" width="1" height="1" fill="#fff"/><rect x="4" y="13" width="1" height="1" fill="#ACA899"/><rect x="5" y="13" width="1" height="1" fill="#fff"/><rect x="6" y="13" width="2" height="1" fill="#ACA899"/><rect x="8" y="13" width="1" height="1" fill="#fff"/><rect x="9" y="13" width="5" height="1" fill="#ACA899"/><rect x="14" y="13" width="1" height="1" fill="#fff"/><rect x="15" y="13" width="1" height="1" fill="#ACA899"/><rect x="16" y="13" width="1" height="1" fill="#fff"/><rect x="4" y="14" width="1" height="1" fill="#ACA899"/><rect x="5" y="14" width="10" height="1" fill="#fff"/><rect x="15" y="14" width="1" height="1" fill="#ACA899"/><rect x="16" y="14" width="1" height="1" fill="#fff"/><rect x="4" y="15" width="1" height="1" fill="#ACA899"/><rect x="5" y="15" width="1" height="1" fill="#fff"/><rect x="6" y="15" width="2" height="1" fill="#ACA899"/><rect x="8" y="15" width="1" height="1" fill="#fff"/><rect x="9" y="15" width="5" height="1" fill="#ACA899"/><rect x="14" y="15" width="1" height="1" fill="#fff"/><rect x="15" y="15" width="1" height="1" fill="#ACA899"/><rect x="16" y="15" width="1" height="1" fill="#fff"/><rect x="4" y="16" width="1" height="1" fill="#ACA899"/><rect x="5" y="16" width="10" height="1" fill="#fff"/><rect x="15" y="16" width="1" height="1" fill="#ACA899"/><rect x="16" y="16" width="1" height="1" fill="#fff"/><rect x="4" y="17" width="12" height="1" fill="#ACA899"/><rect x="16" y="17" width="1" height="1" fill="#fff"/><rect x="5" y="18" width="12" height="1" fill="#fff"/></svg>
<div style="left:6px;top:78px;width:248px;height:17px;background:#0054E3"></div>
<div class="t" style="left:7px;top:79px;font-weight:bold;font-size:12px;line-height:15px;color:#fff">Category</div>
<div style="left:240px;top:80px;width:12px;height:13px;box-sizing:border-box;border-left:1px solid #fff;border-top:1px solid #fff;border-right:1px solid #A69F86;border-bottom:1px solid #A69F86;background:linear-gradient(#F8F6EE,#E4DFCB)"></div>
<svg style="left:242px;top:83px" width="8" height="6" viewBox="0 0 8 6" shape-rendering="crispEdges"><rect x="0" y="0" width="2" height="1" fill="#000"/><rect x="6" y="0" width="2" height="1" fill="#000"/><rect x="1" y="1" width="2" height="1" fill="#000"/><rect x="5" y="1" width="2" height="1" fill="#000"/><rect x="2" y="2" width="4" height="1" fill="#000"/><rect x="2" y="3" width="4" height="1" fill="#000"/><rect x="1" y="4" width="2" height="1" fill="#000"/><rect x="5" y="4" width="2" height="1" fill="#000"/><rect x="0" y="5" width="2" height="1" fill="#000"/><rect x="6" y="5" width="2" height="1" fill="#000"/></svg>
<div style="left:6px;top:95px;width:249px;height:183px;box-sizing:border-box;border:1px solid #000"></div>
<div style="left:7px;top:96px;width:247px;height:181px;box-sizing:border-box;border-top:1px solid #ACA899;border-left:1px solid #ACA899;border-right:1px solid #fff;border-bottom:1px solid #fff"></div>
<div style="left:8px;top:97px;width:245px;height:179px;box-sizing:border-box;border-top:1px solid #716F64;border-left:1px solid #716F64;border-right:1px solid #F1EFE2;border-bottom:1px solid #F1EFE2;background:#fff"></div>
<div style="left:9px;top:98px;width:243px;height:177px;overflow:hidden">
<div style="left:0px;top:0px;width:117px;height:17px;box-sizing:border-box;background:#ECE9D8;border-top:1px solid #fff;border-left:1px solid #fff;box-shadow:inset -1px 0 0 #716F64, inset -2px 0 0 #ACA899"></div>
<div style="left:0px;top:15px;width:117px;height:1px;background:#ACA899"></div>
<div style="left:0px;top:16px;width:117px;height:1px;background:#716F64"></div>
<div style="left:116px;top:0px;width:1px;height:17px;background:#716F64"></div>
<svg style="left:7px;top:4px" width="7" height="7" viewBox="0 0 7 7" shape-rendering="crispEdges"><rect x="3" y="0" width="1" height="1" fill="#77756C"/><rect x="2" y="1" width="1" height="1" fill="#77756C"/><rect x="3" y="1" width="1" height="1" fill="#AEABA0"/><rect x="4" y="1" width="1" height="1" fill="#fff"/><rect x="2" y="2" width="1" height="1" fill="#77756C"/><rect x="3" y="2" width="1" height="1" fill="#AEABA0"/><rect x="4" y="2" width="1" height="1" fill="#fff"/><rect x="1" y="3" width="1" height="1" fill="#77756C"/><rect x="2" y="3" width="3" height="1" fill="#AEABA0"/><rect x="5" y="3" width="1" height="1" fill="#fff"/><rect x="1" y="4" width="1" height="1" fill="#77756C"/><rect x="2" y="4" width="3" height="1" fill="#AEABA0"/><rect x="5" y="4" width="1" height="1" fill="#fff"/><rect x="0" y="5" width="1" height="1" fill="#77756C"/><rect x="1" y="5" width="5" height="1" fill="#AEABA0"/><rect x="6" y="5" width="1" height="1" fill="#fff"/><rect x="0" y="6" width="7" height="1" fill="#fff"/></svg>
<div style="left:26px;top:2px;width:1px;height:1px"><div class="t" style="left:0;top:0;font-size:11px;line-height:14px;transform-origin:0 0;transform:scaleX(1.003)">Category</div></div>
<div style="left:117px;top:0px;width:130px;height:17px;box-sizing:border-box;background:#ECE9D8;border-top:1px solid #fff;border-left:1px solid #fff;box-shadow:inset -1px 0 0 #716F64, inset -2px 0 0 #ACA899"></div>
<div style="left:117px;top:15px;width:130px;height:1px;background:#ACA899"></div>
<div style="left:117px;top:16px;width:130px;height:1px;background:#716F64"></div>
<div style="left:246px;top:0px;width:1px;height:17px;background:#716F64"></div>
<div style="left:2px;top:17px;width:115px;height:14px;background:#316AC5;box-sizing:border-box;border:1px dotted #E8A040"></div>
<div style="left:7px;top:18px;width:1px;height:1px"><div class="t" style="left:0;top:0;font-size:11px;line-height:14px;color:#fff;transform-origin:0 0;transform:scaleX(0.988)">All Objects</div></div>
<div style="left:3px;top:32px;width:1px;height:1px"><div class="t" style="left:0;top:0;font-size:11px;line-height:14px;transform-origin:0 0;transform:scaleX(1.009)">Generated Objects</div></div>
<div style="left:3px;top:46px;width:1px;height:1px"><div class="t" style="left:0;top:0;font-size:11px;line-height:14px;transform-origin:0 0;transform:scaleX(0.984)">Legacy Objects</div></div>
</div>
<div style="left:6px;top:283px;width:248px;height:17px;background:#7A96DF"></div>
<div class="t" style="left:7px;top:284px;font-weight:bold;font-size:12px;line-height:15px;color:#D8E4F8">Tags</div>
<div style="left:240px;top:285px;width:12px;height:13px;box-sizing:border-box;border-left:1px solid #fff;border-top:1px solid #fff;border-right:1px solid #A69F86;border-bottom:1px solid #A69F86;background:linear-gradient(#F8F6EE,#E4DFCB)"></div>
<svg style="left:242px;top:288px" width="8" height="6" viewBox="0 0 8 6" shape-rendering="crispEdges"><rect x="0" y="0" width="2" height="1" fill="#000"/><rect x="6" y="0" width="2" height="1" fill="#000"/><rect x="1" y="1" width="2" height="1" fill="#000"/><rect x="5" y="1" width="2" height="1" fill="#000"/><rect x="2" y="2" width="4" height="1" fill="#000"/><rect x="2" y="3" width="4" height="1" fill="#000"/><rect x="1" y="4" width="2" height="1" fill="#000"/><rect x="5" y="4" width="2" height="1" fill="#000"/><rect x="0" y="5" width="2" height="1" fill="#000"/><rect x="6" y="5" width="2" height="1" fill="#000"/></svg>
<div style="left:6px;top:300px;width:249px;height:184px;box-sizing:border-box;border:1px solid #000"></div>
<div style="left:7px;top:301px;width:247px;height:182px;box-sizing:border-box;border-top:1px solid #ACA899;border-left:1px solid #ACA899;border-right:1px solid #fff;border-bottom:1px solid #fff"></div>
<div style="left:8px;top:302px;width:245px;height:180px;box-sizing:border-box;border-top:1px solid #716F64;border-left:1px solid #716F64;border-right:1px solid #F1EFE2;border-bottom:1px solid #F1EFE2;background:#fff"></div>
<div style="left:9px;top:303px;width:243px;height:178px;overflow:hidden">
<div style="left:0px;top:0px;width:93px;height:17px;box-sizing:border-box;background:#ECE9D8;border-top:1px solid #fff;border-left:1px solid #fff;box-shadow:inset -1px 0 0 #716F64, inset -2px 0 0 #ACA899"></div>
<div style="left:0px;top:15px;width:93px;height:1px;background:#ACA899"></div>
<div style="left:0px;top:16px;width:93px;height:1px;background:#716F64"></div>
<div style="left:92px;top:0px;width:1px;height:17px;background:#716F64"></div>
<svg style="left:7px;top:4px" width="7" height="7" viewBox="0 0 7 7" shape-rendering="crispEdges"><rect x="3" y="0" width="1" height="1" fill="#77756C"/><rect x="2" y="1" width="1" height="1" fill="#77756C"/><rect x="3" y="1" width="1" height="1" fill="#AEABA0"/><rect x="4" y="1" width="1" height="1" fill="#fff"/><rect x="2" y="2" width="1" height="1" fill="#77756C"/><rect x="3" y="2" width="1" height="1" fill="#AEABA0"/><rect x="4" y="2" width="1" height="1" fill="#fff"/><rect x="1" y="3" width="1" height="1" fill="#77756C"/><rect x="2" y="3" width="3" height="1" fill="#AEABA0"/><rect x="5" y="3" width="1" height="1" fill="#fff"/><rect x="1" y="4" width="1" height="1" fill="#77756C"/><rect x="2" y="4" width="3" height="1" fill="#AEABA0"/><rect x="5" y="4" width="1" height="1" fill="#fff"/><rect x="0" y="5" width="1" height="1" fill="#77756C"/><rect x="1" y="5" width="5" height="1" fill="#AEABA0"/><rect x="6" y="5" width="1" height="1" fill="#fff"/><rect x="0" y="6" width="7" height="1" fill="#fff"/></svg>
<div style="left:26px;top:2px;width:1px;height:1px"><div class="t" style="left:0;top:0;font-size:11px;line-height:14px;transform-origin:0 0;transform:scaleX(0.975)">Tag Name</div></div>
<div style="left:93px;top:0px;width:78px;height:17px;box-sizing:border-box;background:#ECE9D8;border-top:1px solid #fff;border-left:1px solid #fff;box-shadow:inset -1px 0 0 #716F64, inset -2px 0 0 #ACA899"></div>
<div style="left:93px;top:15px;width:78px;height:1px;background:#ACA899"></div>
<div style="left:93px;top:16px;width:78px;height:1px;background:#716F64"></div>
<div style="left:170px;top:0px;width:1px;height:17px;background:#716F64"></div>
<div style="left:98px;top:2px;width:1px;height:1px"><div class="t" style="left:0;top:0;font-size:11px;line-height:14px;transform-origin:0 0;transform:scaleX(0.972)">Access</div></div>
<div style="left:171px;top:0px;width:90px;height:17px;box-sizing:border-box;background:#ECE9D8;border-top:1px solid #fff;border-left:1px solid #fff;box-shadow:inset -1px 0 0 #716F64, inset -2px 0 0 #ACA899"></div>
<div style="left:171px;top:15px;width:90px;height:1px;background:#ACA899"></div>
<div style="left:171px;top:16px;width:90px;height:1px;background:#716F64"></div>
<div style="left:260px;top:0px;width:1px;height:17px;background:#716F64"></div>
<div style="left:176px;top:2px;width:1px;height:1px"><div class="t" style="left:0;top:0;font-size:11px;line-height:14px;transform-origin:0 0;transform:scaleX(1.040)">User</div></div>
<div style="left:2px;top:17px;width:240px;height:14px;background:#ECE9D8"></div>
<div style="left:3px;top:18px;width:1px;height:1px"><div class="t" style="left:0;top:0;font-size:11px;line-height:14px;transform-origin:0 0;transform:scaleX(1.011)">Accounting</div></div>
<div style="left:98px;top:18px;width:1px;height:1px"><div class="t" style="left:0;top:0;font-size:11px;line-height:14px;transform-origin:0 0;transform:scaleX(0.978)">Public</div></div>
<div style="left:176px;top:18px;width:1px;height:1px"><div class="t" style="left:0;top:0;font-size:11px;line-height:14px;transform-origin:0 0;transform:scaleX(0.943)">ADMINISTRATOR</div></div>
<div style="left:3px;top:32px;width:1px;height:1px"><div class="t" style="left:0;top:0;font-size:11px;line-height:14px;transform-origin:0 0;transform:scaleX(0.923)">CRM</div></div>
<div style="left:98px;top:32px;width:1px;height:1px"><div class="t" style="left:0;top:0;font-size:11px;line-height:14px;transform-origin:0 0;transform:scaleX(0.978)">Public</div></div>
<div style="left:176px;top:32px;width:1px;height:1px"><div class="t" style="left:0;top:0;font-size:11px;line-height:14px;transform-origin:0 0;transform:scaleX(0.943)">ADMINISTRATOR</div></div>
<div style="left:3px;top:46px;width:1px;height:1px"><div class="t" style="left:0;top:0;font-size:11px;line-height:14px;transform-origin:0 0;transform:scaleX(1.036)">Enterprise</div></div>
<div style="left:98px;top:46px;width:1px;height:1px"><div class="t" style="left:0;top:0;font-size:11px;line-height:14px;transform-origin:0 0;transform:scaleX(0.978)">Public</div></div>
<div style="left:176px;top:46px;width:1px;height:1px"><div class="t" style="left:0;top:0;font-size:11px;line-height:14px;transform-origin:0 0;transform:scaleX(0.943)">ADMINISTRATOR</div></div>
<div style="left:3px;top:60px;width:1px;height:1px"><div class="t" style="left:0;top:0;font-size:11px;line-height:14px;transform-origin:0 0;transform:scaleX(0.959)">Finance</div></div>
<div style="left:98px;top:60px;width:1px;height:1px"><div class="t" style="left:0;top:0;font-size:11px;line-height:14px;transform-origin:0 0;transform:scaleX(0.978)">Public</div></div>
<div style="left:176px;top:60px;width:1px;height:1px"><div class="t" style="left:0;top:0;font-size:11px;line-height:14px;transform-origin:0 0;transform:scaleX(0.943)">ADMINISTRATOR</div></div>
<div style="left:3px;top:74px;width:1px;height:1px"><div class="t" style="left:0;top:0;font-size:11px;line-height:14px;transform-origin:0 0;transform:scaleX(1.002)">HR</div></div>
<div style="left:98px;top:74px;width:1px;height:1px"><div class="t" style="left:0;top:0;font-size:11px;line-height:14px;transform-origin:0 0;transform:scaleX(0.978)">Public</div></div>
<div style="left:176px;top:74px;width:1px;height:1px"><div class="t" style="left:0;top:0;font-size:11px;line-height:14px;transform-origin:0 0;transform:scaleX(0.943)">ADMINISTRATOR</div></div>
<div style="left:3px;top:88px;width:1px;height:1px"><div class="t" style="left:0;top:0;font-size:11px;line-height:14px;transform-origin:0 0;transform:scaleX(0.964)">Payroll</div></div>
<div style="left:98px;top:88px;width:1px;height:1px"><div class="t" style="left:0;top:0;font-size:11px;line-height:14px;transform-origin:0 0;transform:scaleX(0.978)">Public</div></div>
<div style="left:176px;top:88px;width:1px;height:1px"><div class="t" style="left:0;top:0;font-size:11px;line-height:14px;transform-origin:0 0;transform:scaleX(0.943)">ADMINISTRATOR</div></div>
<div style="left:3px;top:102px;width:1px;height:1px"><div class="t" style="left:0;top:0;font-size:11px;line-height:14px;transform-origin:0 0;transform:scaleX(0.952)">Sales</div></div>
<div style="left:98px;top:102px;width:1px;height:1px"><div class="t" style="left:0;top:0;font-size:11px;line-height:14px;transform-origin:0 0;transform:scaleX(0.978)">Public</div></div>
<div style="left:176px;top:102px;width:1px;height:1px"><div class="t" style="left:0;top:0;font-size:11px;line-height:14px;transform-origin:0 0;transform:scaleX(0.943)">ADMINISTRATOR</div></div>
<div style="left:0px;top:161px;width:243px;height:17px;background:linear-gradient(to bottom,#EFEDE3,#F6F5EF 2px,#FCFCF9 40%,#FAFAF6 90%,#F1EFE4)"></div>
<div style="left:1px;top:162px;width:15px;height:15px;box-sizing:border-box;border:1px solid #fff;border-radius:3px;background:linear-gradient(135deg,#D2DEFD,#C2D3FC 60%,#B4C8F8);box-shadow:0 1px 0 #9DB5E6"></div>
<svg style="left:4px;top:165px" width="6" height="9" viewBox="0 0 6 9" shape-rendering="crispEdges"><rect x="4" y="0" width="2" height="1" fill="#4D6185"/><rect x="3" y="1" width="3" height="1" fill="#4D6185"/><rect x="2" y="2" width="3" height="1" fill="#4D6185"/><rect x="1" y="3" width="3" height="1" fill="#4D6185"/><rect x="0" y="4" width="3" height="1" fill="#4D6185"/><rect x="1" y="5" width="3" height="1" fill="#4D6185"/><rect x="2" y="6" width="3" height="1" fill="#4D6185"/><rect x="3" y="7" width="3" height="1" fill="#4D6185"/><rect x="4" y="8" width="2" height="1" fill="#4D6185"/></svg>
<div style="left:227px;top:162px;width:15px;height:15px;box-sizing:border-box;border:1px solid #fff;border-radius:3px;background:linear-gradient(135deg,#D2DEFD,#C2D3FC 60%,#B4C8F8);box-shadow:0 1px 0 #9DB5E6"></div>
<svg style="left:232px;top:165px" width="6" height="9" viewBox="0 0 6 9" shape-rendering="crispEdges"><rect x="0" y="0" width="2" height="1" fill="#4D6185"/><rect x="0" y="1" width="3" height="1" fill="#4D6185"/><rect x="1" y="2" width="3" height="1" fill="#4D6185"/><rect x="2" y="3" width="3" height="1" fill="#4D6185"/><rect x="3" y="4" width="3" height="1" fill="#4D6185"/><rect x="2" y="5" width="3" height="1" fill="#4D6185"/><rect x="1" y="6" width="3" height="1" fill="#4D6185"/><rect x="0" y="7" width="3" height="1" fill="#4D6185"/><rect x="0" y="8" width="2" height="1" fill="#4D6185"/></svg>
<div style="left:17px;top:162px;width:135px;height:15px;box-sizing:border-box;border:1px solid #fff;border-radius:3px;background:linear-gradient(135deg,#D0DDFD,#C6D6FC 60%,#B8CCF9);box-shadow:0 1px 0 #9DB5E6"></div>
<div style="left:80px;top:166px;width:1px;height:7px;background:#fff"></div>
<div style="left:81px;top:167px;width:1px;height:7px;background:#8CAEF4"></div>
<div style="left:82px;top:166px;width:1px;height:7px;background:#fff"></div>
<div style="left:83px;top:167px;width:1px;height:7px;background:#8CAEF4"></div>
<div style="left:84px;top:166px;width:1px;height:7px;background:#fff"></div>
<div style="left:85px;top:167px;width:1px;height:7px;background:#8CAEF4"></div>
<div style="left:86px;top:166px;width:1px;height:7px;background:#fff"></div>
<div style="left:87px;top:167px;width:1px;height:7px;background:#8CAEF4"></div>
</div>
<div style="left:6px;top:489px;width:248px;height:17px;background:#7A96DF"></div>
<div class="t" style="left:7px;top:490px;font-weight:bold;font-size:12px;line-height:15px;color:#D8E4F8">Query</div>
<div style="left:240px;top:491px;width:12px;height:13px;box-sizing:border-box;border-left:1px solid #fff;border-top:1px solid #fff;border-right:1px solid #A69F86;border-bottom:1px solid #A69F86;background:linear-gradient(#F8F6EE,#E4DFCB)"></div>
<svg style="left:242px;top:494px" width="8" height="6" viewBox="0 0 8 6" shape-rendering="crispEdges"><rect x="0" y="0" width="2" height="1" fill="#000"/><rect x="6" y="0" width="2" height="1" fill="#000"/><rect x="1" y="1" width="2" height="1" fill="#000"/><rect x="5" y="1" width="2" height="1" fill="#000"/><rect x="2" y="2" width="4" height="1" fill="#000"/><rect x="2" y="3" width="4" height="1" fill="#000"/><rect x="1" y="4" width="2" height="1" fill="#000"/><rect x="5" y="4" width="2" height="1" fill="#000"/><rect x="0" y="5" width="2" height="1" fill="#000"/><rect x="6" y="5" width="2" height="1" fill="#000"/></svg>
<div style="left:6px;top:506px;width:249px;height:72px;box-sizing:border-box;border:1px solid #000"></div>
<div style="left:7px;top:507px;width:247px;height:70px;box-sizing:border-box;border-top:1px solid #ACA899;border-left:1px solid #ACA899;border-right:1px solid #fff;border-bottom:1px solid #fff"></div>
<div style="left:8px;top:508px;width:245px;height:68px;box-sizing:border-box;border-top:1px solid #716F64;border-left:1px solid #716F64;border-right:1px solid #F1EFE2;border-bottom:1px solid #F1EFE2;background:#fff"></div>
<div style="left:9px;top:509px;width:243px;height:62px;overflow:hidden">
<div style="left:0px;top:0px;width:118px;height:17px;box-sizing:border-box;background:#ECE9D8;border-top:1px solid #fff;border-left:1px solid #fff;box-shadow:inset -1px 0 0 #716F64, inset -2px 0 0 #ACA899"></div>
<div style="left:0px;top:15px;width:118px;height:1px;background:#ACA899"></div>
<div style="left:0px;top:16px;width:118px;height:1px;background:#716F64"></div>
<div style="left:117px;top:0px;width:1px;height:17px;background:#716F64"></div>
<svg style="left:7px;top:4px" width="7" height="7" viewBox="0 0 7 7" shape-rendering="crispEdges"><rect x="3" y="0" width="1" height="1" fill="#77756C"/><rect x="2" y="1" width="1" height="1" fill="#77756C"/><rect x="3" y="1" width="1" height="1" fill="#AEABA0"/><rect x="4" y="1" width="1" height="1" fill="#fff"/><rect x="2" y="2" width="1" height="1" fill="#77756C"/><rect x="3" y="2" width="1" height="1" fill="#AEABA0"/><rect x="4" y="2" width="1" height="1" fill="#fff"/><rect x="1" y="3" width="1" height="1" fill="#77756C"/><rect x="2" y="3" width="3" height="1" fill="#AEABA0"/><rect x="5" y="3" width="1" height="1" fill="#fff"/><rect x="1" y="4" width="1" height="1" fill="#77756C"/><rect x="2" y="4" width="3" height="1" fill="#AEABA0"/><rect x="5" y="4" width="1" height="1" fill="#fff"/><rect x="0" y="5" width="1" height="1" fill="#77756C"/><rect x="1" y="5" width="5" height="1" fill="#AEABA0"/><rect x="6" y="5" width="1" height="1" fill="#fff"/><rect x="0" y="6" width="7" height="1" fill="#fff"/></svg>
<div style="left:26px;top:2px;width:1px;height:1px"><div class="t" style="left:0;top:0;font-size:11px;line-height:14px;transform-origin:0 0;transform:scaleX(1.012)">Query</div></div>
<div style="left:118px;top:0px;width:72px;height:17px;box-sizing:border-box;background:#ECE9D8;border-top:1px solid #fff;border-left:1px solid #fff;box-shadow:inset -1px 0 0 #716F64, inset -2px 0 0 #ACA899"></div>
<div style="left:118px;top:15px;width:72px;height:1px;background:#ACA899"></div>
<div style="left:118px;top:16px;width:72px;height:1px;background:#716F64"></div>
<div style="left:189px;top:0px;width:1px;height:17px;background:#716F64"></div>
<div style="left:123px;top:2px;width:1px;height:1px"><div class="t" style="left:0;top:0;font-size:11px;line-height:14px;transform-origin:0 0;transform:scaleX(1.006)">Empty</div></div>
<div style="left:190px;top:0px;width:60px;height:17px;box-sizing:border-box;background:#ECE9D8;border-top:1px solid #fff;border-left:1px solid #fff;box-shadow:inset -1px 0 0 #716F64, inset -2px 0 0 #ACA899"></div>
<div style="left:190px;top:15px;width:60px;height:1px;background:#ACA899"></div>
<div style="left:190px;top:16px;width:60px;height:1px;background:#716F64"></div>
<div style="left:249px;top:0px;width:1px;height:17px;background:#716F64"></div>
<div style="left:2px;top:17px;width:29px;height:14px;background:#ECE9D8"></div>
<div style="left:3px;top:18px;width:1px;height:1px"><div class="t" style="left:0;top:0;font-size:11px;line-height:14px;transform-origin:0 0;transform:scaleX(1.146)">Test</div></div>
<div style="left:3px;top:32px;width:1px;height:1px"><div class="t" style="left:0;top:0;font-size:11px;line-height:14px;transform-origin:0 0;transform:scaleX(1.007)">UnTagged Objects</div></div>
</div>
<div style="left:260px;top:78px;width:183px;height:17px;background:#7A96DF"></div>
<div class="t" style="left:261px;top:79px;font-weight:bold;font-size:12px;line-height:15px;color:#D8E4F8">Projects</div>
<div style="left:429px;top:80px;width:12px;height:13px;box-sizing:border-box;border-left:1px solid #fff;border-top:1px solid #fff;border-right:1px solid #A69F86;border-bottom:1px solid #A69F86;background:linear-gradient(#F8F6EE,#E4DFCB)"></div>
<svg style="left:431px;top:83px" width="8" height="6" viewBox="0 0 8 6" shape-rendering="crispEdges"><rect x="0" y="0" width="2" height="1" fill="#000"/><rect x="6" y="0" width="2" height="1" fill="#000"/><rect x="1" y="1" width="2" height="1" fill="#000"/><rect x="5" y="1" width="2" height="1" fill="#000"/><rect x="2" y="2" width="4" height="1" fill="#000"/><rect x="2" y="3" width="4" height="1" fill="#000"/><rect x="1" y="4" width="2" height="1" fill="#000"/><rect x="5" y="4" width="2" height="1" fill="#000"/><rect x="0" y="5" width="2" height="1" fill="#000"/><rect x="6" y="5" width="2" height="1" fill="#000"/></svg>
<div style="left:260px;top:95px;width:184px;height:208px;box-sizing:border-box;border:1px solid #000"></div>
<div style="left:261px;top:96px;width:182px;height:206px;box-sizing:border-box;border-top:1px solid #ACA899;border-left:1px solid #ACA899;border-right:1px solid #fff;border-bottom:1px solid #fff"></div>
<div style="left:262px;top:97px;width:180px;height:204px;box-sizing:border-box;border-top:1px solid #716F64;border-left:1px solid #716F64;border-right:1px solid #F1EFE2;border-bottom:1px solid #F1EFE2;background:#fff"></div>
<div style="left:263px;top:98px;width:178px;height:202px;overflow:hidden">
<div style="left:0px;top:0px;width:120px;height:17px;box-sizing:border-box;background:#ECE9D8;border-top:1px solid #fff;border-left:1px solid #fff;box-shadow:inset -1px 0 0 #716F64, inset -2px 0 0 #ACA899"></div>
<div style="left:0px;top:15px;width:120px;height:1px;background:#ACA899"></div>
<div style="left:0px;top:16px;width:120px;height:1px;background:#716F64"></div>
<div style="left:119px;top:0px;width:1px;height:17px;background:#716F64"></div>
<svg style="left:7px;top:4px" width="7" height="7" viewBox="0 0 7 7" shape-rendering="crispEdges"><rect x="3" y="0" width="1" height="1" fill="#77756C"/><rect x="2" y="1" width="1" height="1" fill="#77756C"/><rect x="3" y="1" width="1" height="1" fill="#AEABA0"/><rect x="4" y="1" width="1" height="1" fill="#fff"/><rect x="2" y="2" width="1" height="1" fill="#77756C"/><rect x="3" y="2" width="1" height="1" fill="#AEABA0"/><rect x="4" y="2" width="1" height="1" fill="#fff"/><rect x="1" y="3" width="1" height="1" fill="#77756C"/><rect x="2" y="3" width="3" height="1" fill="#AEABA0"/><rect x="5" y="3" width="1" height="1" fill="#fff"/><rect x="1" y="4" width="1" height="1" fill="#77756C"/><rect x="2" y="4" width="3" height="1" fill="#AEABA0"/><rect x="5" y="4" width="1" height="1" fill="#fff"/><rect x="0" y="5" width="1" height="1" fill="#77756C"/><rect x="1" y="5" width="5" height="1" fill="#AEABA0"/><rect x="6" y="5" width="1" height="1" fill="#fff"/><rect x="0" y="6" width="7" height="1" fill="#fff"/></svg>
<div style="left:26px;top:2px;width:1px;height:1px"><div class="t" style="left:0;top:0;font-size:11px;line-height:14px;transform-origin:0 0;transform:scaleX(0.996)">Project Name</div></div>
<div style="left:120px;top:0px;width:70px;height:17px;box-sizing:border-box;background:#ECE9D8;border-top:1px solid #fff;border-left:1px solid #fff;box-shadow:inset -1px 0 0 #716F64, inset -2px 0 0 #ACA899"></div>
<div style="left:120px;top:15px;width:70px;height:1px;background:#ACA899"></div>
<div style="left:120px;top:16px;width:70px;height:1px;background:#716F64"></div>
<div style="left:189px;top:0px;width:1px;height:17px;background:#716F64"></div>
<div style="left:124px;top:2px;width:1px;height:1px"><div class="t" style="left:0;top:0;font-size:11px;line-height:14px;transform-origin:0 0;transform:scaleX(0.972)">Access</div></div>
<div style="left:3px;top:17px;width:175px;height:14px;background:#ECE9D8"></div>
<div style="left:9px;top:18px;width:1px;height:1px"><div class="t" style="left:0;top:0;font-size:11px;line-height:14px;transform-origin:0 0;transform:scaleX(1.004)">Entire Workspace</div></div>
<div style="left:3px;top:32px;width:1px;height:1px"><div class="t" style="left:0;top:0;font-size:11px;line-height:14px;transform-origin:0 0;transform:scaleX(1.146)">Test</div></div>
<div style="left:124px;top:32px;width:1px;height:1px"><div class="t" style="left:0;top:0;font-size:11px;line-height:14px;transform-origin:0 0;transform:scaleX(1.006)">Private</div></div>
<div style="left:3px;top:46px;width:1px;height:1px"><div class="t" style="left:0;top:0;font-size:11px;line-height:14px;transform-origin:0 0;transform:scaleX(0.973)">TrainingAccess1</div></div>
<div style="left:124px;top:46px;width:1px;height:1px"><div class="t" style="left:0;top:0;font-size:11px;line-height:14px;transform-origin:0 0;transform:scaleX(0.978)">Public</div></div>
<div style="left:0px;top:185px;width:178px;height:17px;background:linear-gradient(to bottom,#EFEDE3,#F6F5EF 2px,#FCFCF9 40%,#FAFAF6 90%,#F1EFE4)"></div>
<div style="left:1px;top:186px;width:15px;height:15px;box-sizing:border-box;border:1px solid #fff;border-radius:3px;background:linear-gradient(135deg,#D2DEFD,#C2D3FC 60%,#B4C8F8);box-shadow:0 1px 0 #9DB5E6"></div>
<svg style="left:4px;top:189px" width="6" height="9" viewBox="0 0 6 9" shape-rendering="crispEdges"><rect x="4" y="0" width="2" height="1" fill="#4D6185"/><rect x="3" y="1" width="3" height="1" fill="#4D6185"/><rect x="2" y="2" width="3" height="1" fill="#4D6185"/><rect x="1" y="3" width="3" height="1" fill="#4D6185"/><rect x="0" y="4" width="3" height="1" fill="#4D6185"/><rect x="1" y="5" width="3" height="1" fill="#4D6185"/><rect x="2" y="6" width="3" height="1" fill="#4D6185"/><rect x="3" y="7" width="3" height="1" fill="#4D6185"/><rect x="4" y="8" width="2" height="1" fill="#4D6185"/></svg>
<div style="left:162px;top:186px;width:15px;height:15px;box-sizing:border-box;border:1px solid #fff;border-radius:3px;background:linear-gradient(135deg,#D2DEFD,#C2D3FC 60%,#B4C8F8);box-shadow:0 1px 0 #9DB5E6"></div>
<svg style="left:167px;top:189px" width="6" height="9" viewBox="0 0 6 9" shape-rendering="crispEdges"><rect x="0" y="0" width="2" height="1" fill="#4D6185"/><rect x="0" y="1" width="3" height="1" fill="#4D6185"/><rect x="1" y="2" width="3" height="1" fill="#4D6185"/><rect x="2" y="3" width="3" height="1" fill="#4D6185"/><rect x="3" y="4" width="3" height="1" fill="#4D6185"/><rect x="2" y="5" width="3" height="1" fill="#4D6185"/><rect x="1" y="6" width="3" height="1" fill="#4D6185"/><rect x="0" y="7" width="3" height="1" fill="#4D6185"/><rect x="0" y="8" width="2" height="1" fill="#4D6185"/></svg>
<div style="left:17px;top:186px;width:96px;height:15px;box-sizing:border-box;border:1px solid #fff;border-radius:3px;background:linear-gradient(135deg,#D0DDFD,#C6D6FC 60%,#B8CCF9);box-shadow:0 1px 0 #9DB5E6"></div>
<div style="left:61px;top:190px;width:1px;height:7px;background:#fff"></div>
<div style="left:62px;top:191px;width:1px;height:7px;background:#8CAEF4"></div>
<div style="left:63px;top:190px;width:1px;height:7px;background:#fff"></div>
<div style="left:64px;top:191px;width:1px;height:7px;background:#8CAEF4"></div>
<div style="left:65px;top:190px;width:1px;height:7px;background:#fff"></div>
<div style="left:66px;top:191px;width:1px;height:7px;background:#8CAEF4"></div>
<div style="left:67px;top:190px;width:1px;height:7px;background:#fff"></div>
<div style="left:68px;top:191px;width:1px;height:7px;background:#8CAEF4"></div>
</div>
<div style="left:449px;top:78px;width:183px;height:17px;background:#7A96DF"></div>
<div class="t" style="left:450px;top:79px;font-weight:bold;font-size:12px;line-height:15px;color:#D8E4F8">Object Types</div>
<div style="left:618px;top:80px;width:12px;height:13px;box-sizing:border-box;border-left:1px solid #fff;border-top:1px solid #fff;border-right:1px solid #A69F86;border-bottom:1px solid #A69F86;background:linear-gradient(#F8F6EE,#E4DFCB)"></div>
<svg style="left:620px;top:83px" width="8" height="6" viewBox="0 0 8 6" shape-rendering="crispEdges"><rect x="0" y="0" width="2" height="1" fill="#000"/><rect x="6" y="0" width="2" height="1" fill="#000"/><rect x="1" y="1" width="2" height="1" fill="#000"/><rect x="5" y="1" width="2" height="1" fill="#000"/><rect x="2" y="2" width="4" height="1" fill="#000"/><rect x="2" y="3" width="4" height="1" fill="#000"/><rect x="1" y="4" width="2" height="1" fill="#000"/><rect x="5" y="4" width="2" height="1" fill="#000"/><rect x="0" y="5" width="2" height="1" fill="#000"/><rect x="6" y="5" width="2" height="1" fill="#000"/></svg>
<div style="left:449px;top:95px;width:184px;height:208px;box-sizing:border-box;border:1px solid #000"></div>
<div style="left:450px;top:96px;width:182px;height:206px;box-sizing:border-box;border-top:1px solid #ACA899;border-left:1px solid #ACA899;border-right:1px solid #fff;border-bottom:1px solid #fff"></div>
<div style="left:451px;top:97px;width:180px;height:204px;box-sizing:border-box;border-top:1px solid #716F64;border-left:1px solid #716F64;border-right:1px solid #F1EFE2;border-bottom:1px solid #F1EFE2;background:#fff"></div>
<div style="left:452px;top:98px;width:178px;height:202px;overflow:hidden">
<div style="left:0px;top:0px;width:121px;height:17px;box-sizing:border-box;background:#ECE9D8;border-top:1px solid #fff;border-left:1px solid #fff;box-shadow:inset -1px 0 0 #716F64, inset -2px 0 0 #ACA899"></div>
<div style="left:0px;top:15px;width:121px;height:1px;background:#ACA899"></div>
<div style="left:0px;top:16px;width:121px;height:1px;background:#716F64"></div>
<div style="left:120px;top:0px;width:1px;height:17px;background:#716F64"></div>
<svg style="left:7px;top:4px" width="7" height="7" viewBox="0 0 7 7" shape-rendering="crispEdges"><rect x="3" y="0" width="1" height="1" fill="#77756C"/><rect x="2" y="1" width="1" height="1" fill="#77756C"/><rect x="3" y="1" width="1" height="1" fill="#AEABA0"/><rect x="4" y="1" width="1" height="1" fill="#fff"/><rect x="2" y="2" width="1" height="1" fill="#77756C"/><rect x="3" y="2" width="1" height="1" fill="#AEABA0"/><rect x="4" y="2" width="1" height="1" fill="#fff"/><rect x="1" y="3" width="1" height="1" fill="#77756C"/><rect x="2" y="3" width="3" height="1" fill="#AEABA0"/><rect x="5" y="3" width="1" height="1" fill="#fff"/><rect x="1" y="4" width="1" height="1" fill="#77756C"/><rect x="2" y="4" width="3" height="1" fill="#AEABA0"/><rect x="5" y="4" width="1" height="1" fill="#fff"/><rect x="0" y="5" width="1" height="1" fill="#77756C"/><rect x="1" y="5" width="5" height="1" fill="#AEABA0"/><rect x="6" y="5" width="1" height="1" fill="#fff"/><rect x="0" y="6" width="7" height="1" fill="#fff"/></svg>
<div style="left:26px;top:2px;width:1px;height:1px"><div class="t" style="left:0;top:0;font-size:11px;line-height:14px;transform-origin:0 0;transform:scaleX(1.029)">Object Type</div></div>
<div style="left:121px;top:0px;width:60px;height:17px;box-sizing:border-box;background:#ECE9D8;border-top:1px solid #fff;border-left:1px solid #fff;box-shadow:inset -1px 0 0 #716F64, inset -2px 0 0 #ACA899"></div>
<div style="left:121px;top:15px;width:60px;height:1px;background:#ACA899"></div>
<div style="left:121px;top:16px;width:60px;height:1px;background:#716F64"></div>
<div style="left:180px;top:0px;width:1px;height:17px;background:#716F64"></div>
<div style="left:18px;top:17px;width:103px;height:17px;background:#ECE9D8"></div>
<div style="left:26px;top:19px;width:1px;height:1px"><div class="t" style="left:0;top:0;font-size:11px;line-height:14px;transform-origin:0 0;transform:scaleX(0.984)">All Types</div></div>
<svg style="left:1px;top:34px" width="18" height="17" shape-rendering="crispEdges"><use href="#i0"/></svg>
<div style="left:19px;top:36px;width:1px;height:1px"><div class="t" style="left:0;top:0;font-size:11px;line-height:14px;transform-origin:0 0;transform:scaleX(0.937)">BMS Copybook File</div></div>
<svg style="left:1px;top:51px" width="18" height="17" shape-rendering="crispEdges"><use href="#i1"/></svg>
<div style="left:19px;top:53px;width:1px;height:1px"><div class="t" style="left:0;top:0;font-size:11px;line-height:14px;transform-origin:0 0;transform:scaleX(0.911)">BMS File</div></div>
<svg style="left:1px;top:68px" width="18" height="17" shape-rendering="crispEdges"><use href="#i2"/></svg>
<div style="left:19px;top:70px;width:1px;height:1px"><div class="t" style="left:0;top:0;font-size:11px;line-height:14px;transform-origin:0 0;transform:scaleX(0.945)">Cobol File</div></div>
<svg style="left:1px;top:85px" width="18" height="17" shape-rendering="crispEdges"><use href="#i3"/></svg>
<div style="left:19px;top:87px;width:1px;height:1px"><div class="t" style="left:0;top:0;font-size:11px;line-height:14px;transform-origin:0 0;transform:scaleX(0.959)">Copybook File</div></div>
<svg style="left:1px;top:102px" width="18" height="17" shape-rendering="crispEdges"><use href="#i4"/></svg>
<div style="left:19px;top:104px;width:1px;height:1px"><div class="t" style="left:0;top:0;font-size:11px;line-height:14px;transform-origin:0 0;transform:scaleX(0.995)">Data Connector</div></div>
<svg style="left:1px;top:119px" width="18" height="17" shape-rendering="crispEdges"><use href="#i5"/></svg>
<div style="left:19px;top:121px;width:1px;height:1px"><div class="t" style="left:0;top:0;font-size:11px;line-height:14px;transform-origin:0 0;transform:scaleX(1.008)">Data Store</div></div>
<svg style="left:1px;top:136px" width="18" height="17" shape-rendering="crispEdges"><use href="#i6"/></svg>
<div style="left:19px;top:138px;width:1px;height:1px"><div class="t" style="left:0;top:0;font-size:11px;line-height:14px;transform-origin:0 0;transform:scaleX(0.988)">Decision</div></div>
<svg style="left:1px;top:153px" width="18" height="17" shape-rendering="crispEdges"><use href="#i7"/></svg>
<div style="left:19px;top:155px;width:1px;height:1px"><div class="t" style="left:0;top:0;font-size:11px;line-height:14px;transform-origin:0 0;transform:scaleX(0.895)">FCT File</div></div>
<svg style="left:1px;top:170px" width="18" height="17" shape-rendering="crispEdges"><use href="#i8"/></svg>
<div style="left:19px;top:172px;width:1px;height:1px"><div class="t" style="left:0;top:0;font-size:11px;line-height:14px;transform-origin:0 0;transform:scaleX(0.956)">File</div></div>
<svg style="left:1px;top:187px" width="18" height="17" shape-rendering="crispEdges"><use href="#i9"/></svg>
<div style="left:19px;top:189px;width:1px;height:1px"><div class="t" style="left:0;top:0;font-size:11px;line-height:14px;transform-origin:0 0;transform:scaleX(0.914)">JCL File</div></div>
<div style="left:161px;top:0px;width:17px;height:202px;background:linear-gradient(to right,#EFEDE3,#F4F3EC 4px,#FCFCF9 40%,#FAFAF6 90%,#F1EFE4)"></div>
<div style="left:162px;top:1px;width:15px;height:15px;box-sizing:border-box;border:1px solid #fff;border-radius:3px;background:linear-gradient(135deg,#D2DEFD,#C2D3FC 60%,#B4C8F8);box-shadow:0 1px 0 #9DB5E6"></div>
<svg style="left:165px;top:5px" width="9" height="6" viewBox="0 0 9 6" shape-rendering="crispEdges"><rect x="4" y="0" width="1" height="1" fill="#4D6185"/><rect x="3" y="1" width="3" height="1" fill="#4D6185"/><rect x="2" y="2" width="5" height="1" fill="#4D6185"/><rect x="1" y="3" width="3" height="1" fill="#4D6185"/><rect x="5" y="3" width="3" height="1" fill="#4D6185"/><rect x="0" y="4" width="3" height="1" fill="#4D6185"/><rect x="6" y="4" width="3" height="1" fill="#4D6185"/><rect x="0" y="5" width="2" height="1" fill="#4D6185"/><rect x="7" y="5" width="2" height="1" fill="#4D6185"/></svg>
<div style="left:162px;top:186px;width:15px;height:15px;box-sizing:border-box;border:1px solid #fff;border-radius:3px;background:linear-gradient(135deg,#D2DEFD,#C2D3FC 60%,#B4C8F8);box-shadow:0 1px 0 #9DB5E6"></div>
<svg style="left:165px;top:190px" width="9" height="6" viewBox="0 0 9 6" shape-rendering="crispEdges"><rect x="0" y="0" width="2" height="1" fill="#4D6185"/><rect x="7" y="0" width="2" height="1" fill="#4D6185"/><rect x="0" y="1" width="3" height="1" fill="#4D6185"/><rect x="6" y="1" width="3" height="1" fill="#4D6185"/><rect x="1" y="2" width="3" height="1" fill="#4D6185"/><rect x="5" y="2" width="3" height="1" fill="#4D6185"/><rect x="2" y="3" width="5" height="1" fill="#4D6185"/><rect x="3" y="4" width="3" height="1" fill="#4D6185"/><rect x="4" y="5" width="1" height="1" fill="#4D6185"/></svg>
<div style="left:162px;top:17px;width:15px;height:96px;box-sizing:border-box;border:1px solid #fff;border-radius:3px;background:linear-gradient(135deg,#D0DDFD,#C6D6FC 60%,#B8CCF9);box-shadow:0 1px 0 #9DB5E6"></div>
<div style="left:166px;top:61px;width:7px;height:1px;background:#fff"></div>
<div style="left:167px;top:62px;width:7px;height:1px;background:#8CAEF4"></div>
<div style="left:166px;top:63px;width:7px;height:1px;background:#fff"></div>
<div style="left:167px;top:64px;width:7px;height:1px;background:#8CAEF4"></div>
<div style="left:166px;top:65px;width:7px;height:1px;background:#fff"></div>
<div style="left:167px;top:66px;width:7px;height:1px;background:#8CAEF4"></div>
<div style="left:166px;top:67px;width:7px;height:1px;background:#fff"></div>
<div style="left:167px;top:68px;width:7px;height:1px;background:#8CAEF4"></div>
</div>
<div style="left:639px;top:78px;width:105px;height:17px;background:#7A96DF"></div>
<div class="t" style="left:640px;top:79px;font-weight:bold;font-size:12px;line-height:15px;color:#D8E4F8">Search</div>
<div style="left:733px;top:80px;width:11px;height:13px;box-sizing:border-box;border-left:1px solid #fff;border-top:1px solid #fff;border-right:1px solid #A69F86;border-bottom:1px solid #A69F86;background:linear-gradient(#F8F6EE,#E4DFCB)"></div>
<svg style="left:735px;top:83px" width="8" height="6" viewBox="0 0 8 6" shape-rendering="crispEdges"><rect x="0" y="0" width="2" height="1" fill="#000"/><rect x="6" y="0" width="2" height="1" fill="#000"/><rect x="1" y="1" width="2" height="1" fill="#000"/><rect x="5" y="1" width="2" height="1" fill="#000"/><rect x="2" y="2" width="4" height="1" fill="#000"/><rect x="2" y="3" width="4" height="1" fill="#000"/><rect x="1" y="4" width="2" height="1" fill="#000"/><rect x="5" y="4" width="2" height="1" fill="#000"/><rect x="0" y="5" width="2" height="1" fill="#000"/><rect x="6" y="5" width="2" height="1" fill="#000"/></svg>
<div style="left:639px;top:95px;width:106px;height:207px;background:#fff;box-sizing:border-box;border-top:1px solid #ACA899;border-left:1px solid #ACA899"></div>
<div style="left:745px;top:78px;width:1px;height:224px;background:#FBF9EE"></div>
<div style="left:641px;top:97px;width:1px;height:1px"><div class="t" style="left:0;top:0;font-size:11px;line-height:14px;transform-origin:0 0;transform:scaleX(1.003)">Object Name:</div></div>
<div style="left:641px;top:115px;width:105px;height:23px;box-sizing:border-box;border-top:1px solid #ACA899;border-left:1px solid #ACA899;border-bottom:1px solid #F1EFE2;background:#fff"></div>
<div style="left:642px;top:116px;width:104px;height:21px;border-top:1px solid #716F64;border-left:1px solid #716F64;box-sizing:border-box"></div>
<div style="left:260px;top:308px;width:484px;height:17px;background:#7A96DF"></div>
<div class="t" style="left:261px;top:309px;font-weight:bold;font-size:12px;line-height:15px;color:#D8E4F8">Object List</div>
<div style="left:733px;top:310px;width:11px;height:13px;box-sizing:border-box;border-left:1px solid #fff;border-top:1px solid #fff;border-right:1px solid #A69F86;border-bottom:1px solid #A69F86;background:linear-gradient(#F8F6EE,#E4DFCB)"></div>
<svg style="left:735px;top:313px" width="8" height="6" viewBox="0 0 8 6" shape-rendering="crispEdges"><rect x="0" y="0" width="2" height="1" fill="#000"/><rect x="6" y="0" width="2" height="1" fill="#000"/><rect x="1" y="1" width="2" height="1" fill="#000"/><rect x="5" y="1" width="2" height="1" fill="#000"/><rect x="2" y="2" width="4" height="1" fill="#000"/><rect x="2" y="3" width="4" height="1" fill="#000"/><rect x="1" y="4" width="2" height="1" fill="#000"/><rect x="5" y="4" width="2" height="1" fill="#000"/><rect x="0" y="5" width="2" height="1" fill="#000"/><rect x="6" y="5" width="2" height="1" fill="#000"/></svg>
<div style="left:260px;top:325px;width:488px;height:249px;box-sizing:border-box;border:1px solid #000"></div>
<div style="left:261px;top:326px;width:486px;height:247px;box-sizing:border-box;border-top:1px solid #ACA899;border-left:1px solid #ACA899;border-right:1px solid #fff;border-bottom:1px solid #fff"></div>
<div style="left:262px;top:327px;width:484px;height:245px;box-sizing:border-box;border-top:1px solid #716F64;border-left:1px solid #716F64;border-right:1px solid #F1EFE2;border-bottom:1px solid #F1EFE2;background:#fff"></div>
<div style="left:263px;top:328px;width:482px;height:243px;overflow:hidden">
<div style="left:0px;top:0px;width:121px;height:17px;box-sizing:border-box;background:#ECE9D8;border-top:1px solid #fff;border-left:1px solid #fff;box-shadow:inset -1px 0 0 #716F64, inset -2px 0 0 #ACA899"></div>
<div style="left:0px;top:15px;width:121px;height:1px;background:#ACA899"></div>
<div style="left:0px;top:16px;width:121px;height:1px;background:#716F64"></div>
<div style="left:120px;top:0px;width:1px;height:17px;background:#716F64"></div>
<svg style="left:7px;top:4px" width="7" height="7" viewBox="0 0 7 7" shape-rendering="crispEdges"><rect x="3" y="0" width="1" height="1" fill="#77756C"/><rect x="2" y="1" width="1" height="1" fill="#77756C"/><rect x="3" y="1" width="1" height="1" fill="#AEABA0"/><rect x="4" y="1" width="1" height="1" fill="#fff"/><rect x="2" y="2" width="1" height="1" fill="#77756C"/><rect x="3" y="2" width="1" height="1" fill="#AEABA0"/><rect x="4" y="2" width="1" height="1" fill="#fff"/><rect x="1" y="3" width="1" height="1" fill="#77756C"/><rect x="2" y="3" width="3" height="1" fill="#AEABA0"/><rect x="5" y="3" width="1" height="1" fill="#fff"/><rect x="1" y="4" width="1" height="1" fill="#77756C"/><rect x="2" y="4" width="3" height="1" fill="#AEABA0"/><rect x="5" y="4" width="1" height="1" fill="#fff"/><rect x="0" y="5" width="1" height="1" fill="#77756C"/><rect x="1" y="5" width="5" height="1" fill="#AEABA0"/><rect x="6" y="5" width="1" height="1" fill="#fff"/><rect x="0" y="6" width="7" height="1" fill="#fff"/></svg>
<div style="left:26px;top:2px;width:1px;height:1px"><div class="t" style="left:0;top:0;font-size:11px;line-height:14px;transform-origin:0 0;transform:scaleX(1.029)">Object Type</div></div>
<div style="left:121px;top:0px;width:193px;height:17px;box-sizing:border-box;background:#ECE9D8;border-top:1px solid #fff;border-left:1px solid #fff;box-shadow:inset -1px 0 0 #716F64, inset -2px 0 0 #ACA899"></div>
<div style="left:121px;top:15px;width:193px;height:1px;background:#ACA899"></div>
<div style="left:121px;top:16px;width:193px;height:1px;background:#716F64"></div>
<div style="left:313px;top:0px;width:1px;height:17px;background:#716F64"></div>
<div style="left:126px;top:2px;width:1px;height:1px"><div class="t" style="left:0;top:0;font-size:11px;line-height:14px;transform-origin:0 0;transform:scaleX(0.986)">Object Name</div></div>
<div style="left:314px;top:0px;width:95px;height:17px;box-sizing:border-box;background:#ECE9D8;border-top:1px solid #fff;border-left:1px solid #fff;box-shadow:inset -1px 0 0 #716F64, inset -2px 0 0 #ACA899"></div>
<div style="left:314px;top:15px;width:95px;height:1px;background:#ACA899"></div>
<div style="left:314px;top:16px;width:95px;height:1px;background:#716F64"></div>
<div style="left:408px;top:0px;width:1px;height:17px;background:#716F64"></div>
<div style="left:318px;top:2px;width:1px;height:1px"><div class="t" style="left:0;top:0;font-size:11px;line-height:14px;transform-origin:0 0;transform:scaleX(1.031)">Object Tag</div></div>
<div style="left:409px;top:0px;width:70px;height:17px;box-sizing:border-box;background:#ECE9D8;border-top:1px solid #fff;border-left:1px solid #fff;box-shadow:inset -1px 0 0 #716F64, inset -2px 0 0 #ACA899"></div>
<div style="left:409px;top:15px;width:70px;height:1px;background:#ACA899"></div>
<div style="left:409px;top:16px;width:70px;height:1px;background:#716F64"></div>
<div style="left:478px;top:0px;width:1px;height:17px;background:#716F64"></div>
<svg style="left:1px;top:17px" width="18" height="17" shape-rendering="crispEdges"><use href="#i0"/></svg>
<div style="left:19px;top:19px;width:1px;height:1px"><div class="t" style="left:0;top:0;font-size:11px;line-height:14px;transform-origin:0 0;transform:scaleX(0.937)">BMS Copybook File</div></div>
<div style="left:126px;top:19px;width:1px;height:1px"><div class="t" style="left:0;top:0;font-size:11px;line-height:14px;transform-origin:0 0;transform:scaleX(1.146)">Test</div></div>
<svg style="left:1px;top:34px" width="18" height="17" shape-rendering="crispEdges"><use href="#i1"/></svg>
<div style="left:19px;top:36px;width:1px;height:1px"><div class="t" style="left:0;top:0;font-size:11px;line-height:14px;transform-origin:0 0;transform:scaleX(0.911)">BMS File</div></div>
<div style="left:126px;top:36px;width:1px;height:1px"><div class="t" style="left:0;top:0;font-size:11px;line-height:14px;transform-origin:0 0;transform:scaleX(0.925)">INQSET1.BMS</div></div>
<svg style="left:1px;top:51px" width="18" height="17" shape-rendering="crispEdges"><use href="#i1"/></svg>
<div style="left:19px;top:53px;width:1px;height:1px"><div class="t" style="left:0;top:0;font-size:11px;line-height:14px;transform-origin:0 0;transform:scaleX(0.911)">BMS File</div></div>
<div style="left:126px;top:53px;width:1px;height:1px"><div class="t" style="left:0;top:0;font-size:11px;line-height:14px;transform-origin:0 0;transform:scaleX(0.907)">MENSET1.BMS</div></div>
<svg style="left:1px;top:68px" width="18" height="17" shape-rendering="crispEdges"><use href="#i1"/></svg>
<div style="left:19px;top:70px;width:1px;height:1px"><div class="t" style="left:0;top:0;font-size:11px;line-height:14px;transform-origin:0 0;transform:scaleX(0.911)">BMS File</div></div>
<div style="left:126px;top:70px;width:1px;height:1px"><div class="t" style="left:0;top:0;font-size:11px;line-height:14px;transform-origin:0 0;transform:scaleX(0.914)">MNTSET1.BMS</div></div>
<svg style="left:1px;top:85px" width="18" height="17" shape-rendering="crispEdges"><use href="#i1"/></svg>
<div style="left:19px;top:87px;width:1px;height:1px"><div class="t" style="left:0;top:0;font-size:11px;line-height:14px;transform-origin:0 0;transform:scaleX(0.911)">BMS File</div></div>
<div style="left:126px;top:87px;width:1px;height:1px"><div class="t" style="left:0;top:0;font-size:11px;line-height:14px;transform-origin:0 0;transform:scaleX(0.907)">ORDSET1.BMS</div></div>
<svg style="left:1px;top:102px" width="18" height="17" shape-rendering="crispEdges"><use href="#i2"/></svg>
<div style="left:19px;top:104px;width:1px;height:1px"><div class="t" style="left:0;top:0;font-size:11px;line-height:14px;transform-origin:0 0;transform:scaleX(0.945)">Cobol File</div></div>
<div style="left:126px;top:104px;width:1px;height:1px"><div class="t" style="left:0;top:0;font-size:11px;line-height:14px;transform-origin:0 0;transform:scaleX(0.938)">AR7100.CBL</div></div>
<div style="left:318px;top:104px;width:1px;height:1px"><div class="t" style="left:0;top:0;font-size:11px;line-height:14px;transform-origin:0 0;transform:scaleX(1.036)">Enterprise</div></div>
<svg style="left:1px;top:119px" width="18" height="17" shape-rendering="crispEdges"><use href="#i2"/></svg>
<div style="left:19px;top:121px;width:1px;height:1px"><div class="t" style="left:0;top:0;font-size:11px;line-height:14px;transform-origin:0 0;transform:scaleX(0.945)">Cobol File</div></div>
<div style="left:126px;top:121px;width:1px;height:1px"><div class="t" style="left:0;top:0;font-size:11px;line-height:14px;transform-origin:0 0;transform:scaleX(0.986)">AR7200.cbl</div></div>
<div style="left:318px;top:121px;width:1px;height:1px"><div class="t" style="left:0;top:0;font-size:11px;line-height:14px;transform-origin:0 0;transform:scaleX(1.011)">Accounting</div></div>
<svg style="left:1px;top:136px" width="18" height="17" shape-rendering="crispEdges"><use href="#i2"/></svg>
<div style="left:19px;top:138px;width:1px;height:1px"><div class="t" style="left:0;top:0;font-size:11px;line-height:14px;transform-origin:0 0;transform:scaleX(0.945)">Cobol File</div></div>
<div style="left:126px;top:138px;width:1px;height:1px"><div class="t" style="left:0;top:0;font-size:11px;line-height:14px;transform-origin:0 0;transform:scaleX(0.986)">AR7300.cbl</div></div>
<svg style="left:1px;top:153px" width="18" height="17" shape-rendering="crispEdges"><use href="#i2"/></svg>
<div style="left:19px;top:155px;width:1px;height:1px"><div class="t" style="left:0;top:0;font-size:11px;line-height:14px;transform-origin:0 0;transform:scaleX(0.945)">Cobol File</div></div>
<div style="left:126px;top:155px;width:1px;height:1px"><div class="t" style="left:0;top:0;font-size:11px;line-height:14px;transform-origin:0 0;transform:scaleX(0.936)">CheckDigit$compl.CCP</div></div>
<svg style="left:1px;top:170px" width="18" height="17" shape-rendering="crispEdges"><use href="#i2"/></svg>
<div style="left:19px;top:172px;width:1px;height:1px"><div class="t" style="left:0;top:0;font-size:11px;line-height:14px;transform-origin:0 0;transform:scaleX(0.945)">Cobol File</div></div>
<div style="left:126px;top:172px;width:1px;height:1px"><div class="t" style="left:0;top:0;font-size:11px;line-height:14px;transform-origin:0 0;transform:scaleX(0.926)">CheckDigit.CCP</div></div>
<svg style="left:1px;top:187px" width="18" height="17" shape-rendering="crispEdges"><use href="#i2"/></svg>
<div style="left:19px;top:189px;width:1px;height:1px"><div class="t" style="left:0;top:0;font-size:11px;line-height:14px;transform-origin:0 0;transform:scaleX(0.945)">Cobol File</div></div>
<div style="left:126px;top:189px;width:1px;height:1px"><div class="t" style="left:0;top:0;font-size:11px;line-height:14px;transform-origin:0 0;transform:scaleX(0.944)">CUSTINQ1.ccp</div></div>
<svg style="left:1px;top:204px" width="18" height="17" shape-rendering="crispEdges"><use href="#i2"/></svg>
<div style="left:19px;top:206px;width:1px;height:1px"><div class="t" style="left:0;top:0;font-size:11px;line-height:14px;transform-origin:0 0;transform:scaleX(0.945)">Cobol File</div></div>
<div style="left:126px;top:206px;width:1px;height:1px"><div class="t" style="left:0;top:0;font-size:11px;line-height:14px;transform-origin:0 0;transform:scaleX(0.932)">CUSTMNT1.ccp</div></div>
<svg style="left:1px;top:221px" width="18" height="17" shape-rendering="crispEdges"><use href="#i2"/></svg>
<div style="left:19px;top:223px;width:1px;height:1px"><div class="t" style="left:0;top:0;font-size:11px;line-height:14px;transform-origin:0 0;transform:scaleX(0.945)">Cobol File</div></div>
<div style="left:126px;top:223px;width:1px;height:1px"><div class="t" style="left:0;top:0;font-size:11px;line-height:14px;transform-origin:0 0;transform:scaleX(0.879)">DCE1.CCP</div></div>
<svg style="left:1px;top:238px" width="18" height="17" shape-rendering="crispEdges"><use href="#i2"/></svg>
<div style="left:19px;top:240px;width:1px;height:1px"><div class="t" style="left:0;top:0;font-size:11px;line-height:14px;transform-origin:0 0;transform:scaleX(0.945)">Cobol File</div></div>
<div style="left:465px;top:0px;width:17px;height:244px;background:linear-gradient(to right,#EFEDE3,#F4F3EC 4px,#FCFCF9 40%,#FAFAF6 90%,#F1EFE4)"></div>
<div style="left:466px;top:1px;width:15px;height:15px;box-sizing:border-box;border:1px solid #fff;border-radius:3px;background:linear-gradient(135deg,#D2DEFD,#C2D3FC 60%,#B4C8F8);box-shadow:0 1px 0 #9DB5E6"></div>
<svg style="left:469px;top:5px" width="9" height="6" viewBox="0 0 9 6" shape-rendering="crispEdges"><rect x="4" y="0" width="1" height="1" fill="#4D6185"/><rect x="3" y="1" width="3" height="1" fill="#4D6185"/><rect x="2" y="2" width="5" height="1" fill="#4D6185"/><rect x="1" y="3" width="3" height="1" fill="#4D6185"/><rect x="5" y="3" width="3" height="1" fill="#4D6185"/><rect x="0" y="4" width="3" height="1" fill="#4D6185"/><rect x="6" y="4" width="3" height="1" fill="#4D6185"/><rect x="0" y="5" width="2" height="1" fill="#4D6185"/><rect x="7" y="5" width="2" height="1" fill="#4D6185"/></svg>
<div style="left:466px;top:228px;width:15px;height:15px;box-sizing:border-box;border:1px solid #fff;border-radius:3px;background:linear-gradient(135deg,#D2DEFD,#C2D3FC 60%,#B4C8F8);box-shadow:0 1px 0 #9DB5E6"></div>
<svg style="left:469px;top:232px" width="9" height="6" viewBox="0 0 9 6" shape-rendering="crispEdges"><rect x="0" y="0" width="2" height="1" fill="#4D6185"/><rect x="7" y="0" width="2" height="1" fill="#4D6185"/><rect x="0" y="1" width="3" height="1" fill="#4D6185"/><rect x="6" y="1" width="3" height="1" fill="#4D6185"/><rect x="1" y="2" width="3" height="1" fill="#4D6185"/><rect x="5" y="2" width="3" height="1" fill="#4D6185"/><rect x="2" y="3" width="5" height="1" fill="#4D6185"/><rect x="3" y="4" width="3" height="1" fill="#4D6185"/><rect x="4" y="5" width="1" height="1" fill="#4D6185"/></svg>
<div style="left:466px;top:17px;width:15px;height:26px;box-sizing:border-box;border:1px solid #fff;border-radius:3px;background:linear-gradient(135deg,#D0DDFD,#C6D6FC 60%,#B8CCF9);box-shadow:0 1px 0 #9DB5E6"></div>
<div style="left:470px;top:26px;width:7px;height:1px;background:#fff"></div>
<div style="left:471px;top:27px;width:7px;height:1px;background:#8CAEF4"></div>
<div style="left:470px;top:28px;width:7px;height:1px;background:#fff"></div>
<div style="left:471px;top:29px;width:7px;height:1px;background:#8CAEF4"></div>
<div style="left:470px;top:30px;width:7px;height:1px;background:#fff"></div>
<div style="left:471px;top:31px;width:7px;height:1px;background:#8CAEF4"></div>
<div style="left:470px;top:32px;width:7px;height:1px;background:#fff"></div>
<div style="left:471px;top:33px;width:7px;height:1px;background:#8CAEF4"></div>
</div>
<div style="left:0;top:30px;width:4px;height:547px;background:linear-gradient(to right,#0019CF 0,#0019CF 1px,#0A5AEB 1px,#0A5AEB 2px,#1E6FF5 2px,#1E6FF5 3px,#0050E0 3px)"></div>
<div style="left:746px;top:30px;width:4px;height:547px;background:linear-gradient(to right,#0A50E8 0,#0A50E8 1px,#0038D0 1px,#0038D0 2px,#0020A8 2px,#0020A8 3px,#001588 3px)"></div>
<div style="left:4px;top:573px;width:746px;height:4px;background:linear-gradient(to bottom,#0A50E8 0,#0A50E8 1px,#0040D8 1px,#0040D8 2px,#0030C0 2px,#0030C0 3px,#001A9A 3px)"></div>
</div></body></html>
